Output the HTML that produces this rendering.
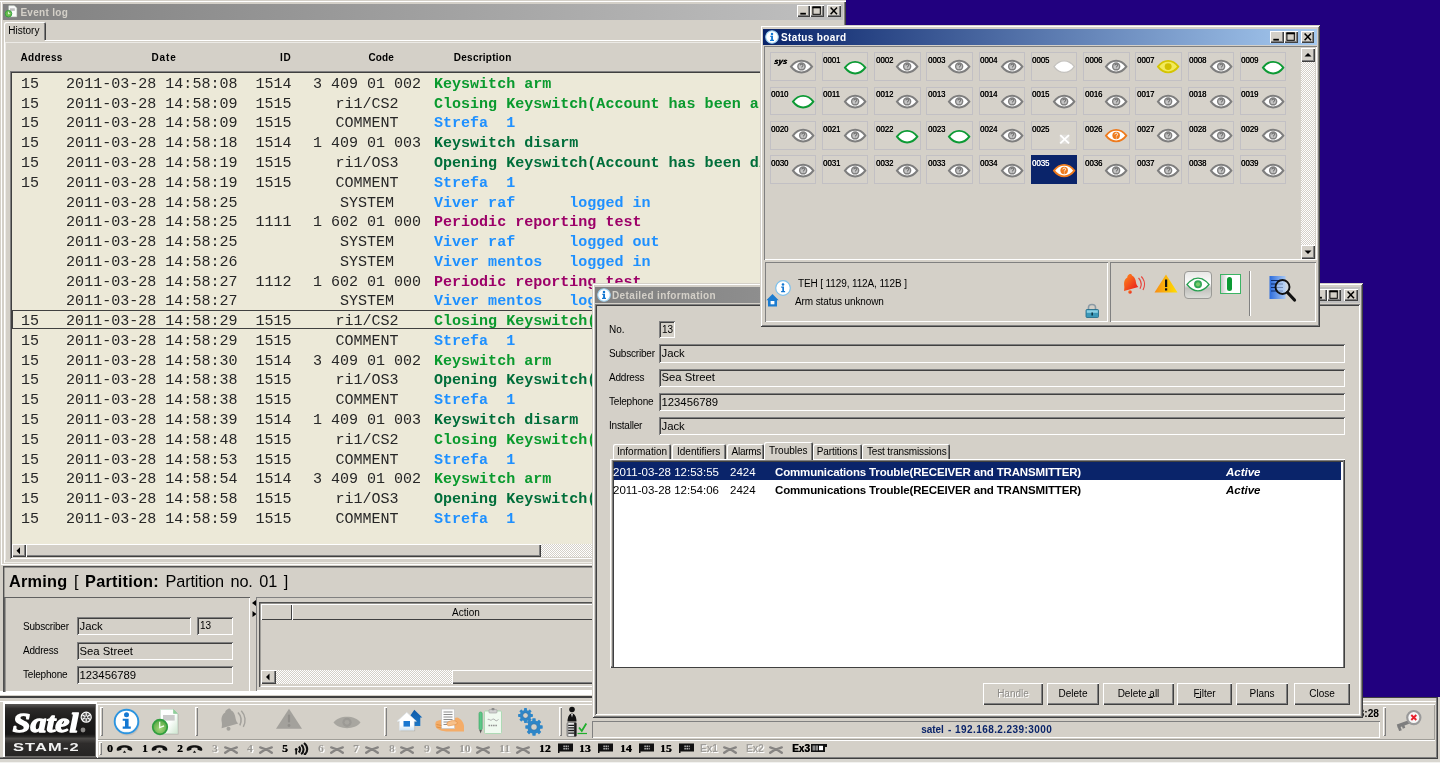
<!DOCTYPE html>
<html><head><meta charset="utf-8"><title>STAM-2</title>
<style>
*{box-sizing:border-box;margin:0;padding:0}
html,body{width:1440px;height:763px;overflow:hidden;background:#21007f}
body{position:relative;font-family:"Liberation Sans",sans-serif;font-size:11px;color:#000}
.a{position:absolute}
.t{position:absolute;white-space:pre;line-height:1}
.face{background:#d4d0c8}
.win{position:absolute;background:#d4d0c8;box-shadow:inset 1px 1px #d4d0c8,inset -1px -1px #404040,inset 2px 2px #fff,inset -2px -2px #808080}
.sunk{box-shadow:inset 1px 1px #808080,inset -1px -1px #fff}
.sunk2{box-shadow:inset 1px 1px #808080,inset -1px -1px #fff,inset 2px 2px #404040,inset -2px -2px #d4d0c8}
.rais{box-shadow:inset 1px 1px #fff,inset -1px -1px #808080}
.btn{position:absolute;background:#d4d0c8;box-shadow:inset 1px 1px #fff,inset -1px -1px #404040,inset -2px -2px #808080}
.cap{position:absolute;width:13.800px;height:12.200px;background:#d4d0c8;box-shadow:inset 1px 1px #fff,inset -1px -1px #404040,inset -2px -2px #808080}
.tba{background:linear-gradient(to right,#0a246a,#a6caf0)}
.tbi{background:linear-gradient(to right,#808080,#c0c0c0)}
.dith{background-image:conic-gradient(#fff 25%,#d4d0c8 0 50%,#fff 0 75%,#d4d0c8 0);background-size:2px 2px}
.mono{font-family:"Liberation Mono",monospace}
</style></head>
<body>
<div class="a" style="left:0;top:0;width:1440px;height:763px;overflow:hidden;will-change:transform">
<div class="a face" style="left:0px;top:0px;width:846px;height:697px;box-shadow:inset 0 1px #d4d0c8,inset 0 2px #fff,inset -1px 0 #404040,inset -2px 0 #808080"></div>
<div class="a " style="left:2px;top:564.3px;width:842px;height:1px;background:#fff"></div>
<div class="a " style="left:0px;top:691px;width:846px;height:4px;background:#fff"></div>
<div class="a " style="left:0px;top:696px;width:846px;height:1.4px;background:#404040"></div>
<div class="a tbi" style="left:3px;top:4px;width:840px;height:15.5px;"></div>
<svg class="a" style="left:4px;top:4px" width="14" height="15" viewBox="0 0 14 15"><path d="M4.800 1.800h5.600l2.300 2.300v8.600H4.800z" fill="#fafafa" stroke="#d8e8d8" stroke-width=".5"/><rect x="6" y="4.300" width="4.800" height="2.600" fill="#bdbdbd"/><circle cx="4.500" cy="9.700" r="3.300" fill="#6cbd4c" stroke="#2f9e3f" stroke-width=".9"/><path d="M4.500 7.800v2.200l1.700-.6" stroke="#f0fff0" stroke-width=".8" fill="none"/></svg>
<div class="t " style="left:20.4px;top:7.6px;font-size:10px;font-weight:bold;color:#d4d0c8;letter-spacing:.3px">Event log</div>
<div class="cap" style="left:796.6px;top:5.2px"><svg class="a" style="left:0;top:0" width="14" height="12"><rect x="3.300" y="7.800" width="5.600" height="1.800" fill="#000"/></svg></div>
<div class="cap" style="left:810.4px;top:5.2px"><svg class="a" style="left:0;top:0" width="14" height="12"><rect x="2.900" y="2" width="7.400" height="7.300" fill="none" stroke="#000" stroke-width="1"/><rect x="2.400" y="1.500" width="8.400" height="1.800" fill="#000"/></svg></div>
<div class="cap" style="left:827.2px;top:5.2px"><svg class="a" style="left:0;top:0" width="14" height="12"><path d="M3.600 2.400L10 9.200M10 2.400L3.600 9.200" stroke="#000" stroke-width="1.500" fill="none"/></svg></div>
<div class="a " style="left:4px;top:22px;width:42px;height:19px;background:#d4d0c8;box-shadow:inset 1px 1px #fff,inset -1px 0 #404040,inset -2px 0 #808080;border-radius:2px 2px 0 0"></div>
<div class="t " style="left:8.3px;top:25.5px;font-size:10px;">History</div>
<div class="a " style="left:4px;top:40px;width:838px;height:523px;box-shadow:inset 1px 1px #fff,inset -1px -1px #f0eee8"></div>
<div class="a face" style="left:5px;top:40px;width:40px;height:1px;"></div>
<div class="a " style="left:5px;top:41.8px;width:835px;height:518px;box-shadow:inset 1px 1px #eceae6"></div>
<div class="t " style="left:20.5px;top:52.6px;font-size:10px;font-weight:bold;letter-spacing:0.32px">Address</div>
<div class="t " style="left:151.5px;top:52.6px;font-size:10px;font-weight:bold;letter-spacing:0.85px">Date</div>
<div class="t " style="left:280px;top:52.6px;font-size:10px;font-weight:bold;letter-spacing:0.8px">ID</div>
<div class="t " style="left:368.5px;top:52.6px;font-size:10px;font-weight:bold;letter-spacing:0.1px">Code</div>
<div class="t " style="left:453.8px;top:52.6px;font-size:10px;font-weight:bold;letter-spacing:0.25px">Description</div>
<div class="a sunk2" style="left:10px;top:71px;width:828px;height:488px;background:#ece9d8"></div>
<div class="a mono" style="left:12px;top:73px;width:824px;height:470px;overflow:hidden;font-size:15.04px;line-height:1">
<div class="t" style="left:9px;top:3.9px;color:#262626">15   2011-03-28 14:58:08  1514</div><div class="t" style="left:300.9px;top:3.9px;color:#262626">3 409 01 002</div><div class="t" style="left:422px;top:3.9px;font-weight:bold;color:#0a9a2e">Keyswitch arm</div>
<div class="t" style="left:9px;top:23.67px;color:#262626">15   2011-03-28 14:58:09  1515</div><div class="t" style="left:323.4px;top:23.67px;color:#262626">ri1/CS2</div><div class="t" style="left:422px;top:23.67px;font-weight:bold;color:#0a9a2e">Closing Keyswitch(Account has been armed)</div>
<div class="t" style="left:9px;top:43.44px;color:#262626">15   2011-03-28 14:58:09  1515</div><div class="t" style="left:323.4px;top:43.44px;color:#262626">COMMENT</div><div class="t" style="left:422px;top:43.44px;font-weight:bold;color:#1e90ff">Strefa  1</div>
<div class="t" style="left:9px;top:63.21px;color:#262626">15   2011-03-28 14:58:18  1514</div><div class="t" style="left:300.9px;top:63.21px;color:#262626">1 409 01 003</div><div class="t" style="left:422px;top:63.21px;font-weight:bold;color:#006e3a">Keyswitch disarm</div>
<div class="t" style="left:9px;top:82.98px;color:#262626">15   2011-03-28 14:58:19  1515</div><div class="t" style="left:323.4px;top:82.98px;color:#262626">ri1/OS3</div><div class="t" style="left:422px;top:82.98px;font-weight:bold;color:#006e3a">Opening Keyswitch(Account has been disarmed)</div>
<div class="t" style="left:9px;top:102.75px;color:#262626">15   2011-03-28 14:58:19  1515</div><div class="t" style="left:323.4px;top:102.75px;color:#262626">COMMENT</div><div class="t" style="left:422px;top:102.75px;font-weight:bold;color:#1e90ff">Strefa  1</div>
<div class="t" style="left:9px;top:122.52px;color:#262626">     2011-03-28 14:58:25      </div><div class="t" style="left:327.9px;top:122.52px;color:#262626">SYSTEM</div><div class="t" style="left:422px;top:122.52px;font-weight:bold;color:#1e90ff">Viver raf      logged in</div>
<div class="t" style="left:9px;top:142.29px;color:#262626">     2011-03-28 14:58:25  1111</div><div class="t" style="left:300.9px;top:142.29px;color:#262626">1 602 01 000</div><div class="t" style="left:422px;top:142.29px;font-weight:bold;color:#9c0068">Periodic reporting test</div>
<div class="t" style="left:9px;top:162.06px;color:#262626">     2011-03-28 14:58:25      </div><div class="t" style="left:327.9px;top:162.06px;color:#262626">SYSTEM</div><div class="t" style="left:422px;top:162.06px;font-weight:bold;color:#1e90ff">Viver raf      logged out</div>
<div class="t" style="left:9px;top:181.83px;color:#262626">     2011-03-28 14:58:26      </div><div class="t" style="left:327.9px;top:181.83px;color:#262626">SYSTEM</div><div class="t" style="left:422px;top:181.83px;font-weight:bold;color:#1e90ff">Viver mentos   logged in</div>
<div class="t" style="left:9px;top:201.6px;color:#262626">     2011-03-28 14:58:27  1112</div><div class="t" style="left:300.9px;top:201.6px;color:#262626">1 602 01 000</div><div class="t" style="left:422px;top:201.6px;font-weight:bold;color:#9c0068">Periodic reporting test</div>
<div class="t" style="left:9px;top:221.37px;color:#262626">     2011-03-28 14:58:27      </div><div class="t" style="left:327.9px;top:221.37px;color:#262626">SYSTEM</div><div class="t" style="left:422px;top:221.37px;font-weight:bold;color:#1e90ff">Viver mentos   logged out</div>
<div class="a" style="left:0;top:236.8px;width:824px;height:19.400px;border:1.200px solid #404040"></div>
<div class="t" style="left:9px;top:241.14px;color:#262626">15   2011-03-28 14:58:29  1515</div><div class="t" style="left:323.4px;top:241.14px;color:#262626">ri1/CS2</div><div class="t" style="left:422px;top:241.14px;font-weight:bold;color:#0a9a2e">Closing Keyswitch(Account has been armed)</div>
<div class="t" style="left:9px;top:260.91px;color:#262626">15   2011-03-28 14:58:29  1515</div><div class="t" style="left:323.4px;top:260.91px;color:#262626">COMMENT</div><div class="t" style="left:422px;top:260.91px;font-weight:bold;color:#1e90ff">Strefa  1</div>
<div class="t" style="left:9px;top:280.68px;color:#262626">15   2011-03-28 14:58:30  1514</div><div class="t" style="left:300.9px;top:280.68px;color:#262626">3 409 01 002</div><div class="t" style="left:422px;top:280.68px;font-weight:bold;color:#0a9a2e">Keyswitch arm</div>
<div class="t" style="left:9px;top:300.45px;color:#262626">15   2011-03-28 14:58:38  1515</div><div class="t" style="left:323.4px;top:300.45px;color:#262626">ri1/OS3</div><div class="t" style="left:422px;top:300.45px;font-weight:bold;color:#006e3a">Opening Keyswitch(Account has been disarmed)</div>
<div class="t" style="left:9px;top:320.22px;color:#262626">15   2011-03-28 14:58:38  1515</div><div class="t" style="left:323.4px;top:320.22px;color:#262626">COMMENT</div><div class="t" style="left:422px;top:320.22px;font-weight:bold;color:#1e90ff">Strefa  1</div>
<div class="t" style="left:9px;top:339.99px;color:#262626">15   2011-03-28 14:58:39  1514</div><div class="t" style="left:300.9px;top:339.99px;color:#262626">1 409 01 003</div><div class="t" style="left:422px;top:339.99px;font-weight:bold;color:#006e3a">Keyswitch disarm</div>
<div class="t" style="left:9px;top:359.76px;color:#262626">15   2011-03-28 14:58:48  1515</div><div class="t" style="left:323.4px;top:359.76px;color:#262626">ri1/CS2</div><div class="t" style="left:422px;top:359.76px;font-weight:bold;color:#0a9a2e">Closing Keyswitch(Account has been armed)</div>
<div class="t" style="left:9px;top:379.53px;color:#262626">15   2011-03-28 14:58:53  1515</div><div class="t" style="left:323.4px;top:379.53px;color:#262626">COMMENT</div><div class="t" style="left:422px;top:379.53px;font-weight:bold;color:#1e90ff">Strefa  1</div>
<div class="t" style="left:9px;top:399.3px;color:#262626">15   2011-03-28 14:58:54  1514</div><div class="t" style="left:300.9px;top:399.3px;color:#262626">3 409 01 002</div><div class="t" style="left:422px;top:399.3px;font-weight:bold;color:#0a9a2e">Keyswitch arm</div>
<div class="t" style="left:9px;top:419.07px;color:#262626">15   2011-03-28 14:58:58  1515</div><div class="t" style="left:323.4px;top:419.07px;color:#262626">ri1/OS3</div><div class="t" style="left:422px;top:419.07px;font-weight:bold;color:#006e3a">Opening Keyswitch(Account has been disarmed)</div>
<div class="t" style="left:9px;top:438.84px;color:#262626">15   2011-03-28 14:58:59  1515</div><div class="t" style="left:323.4px;top:438.84px;color:#262626">COMMENT</div><div class="t" style="left:422px;top:438.84px;font-weight:bold;color:#1e90ff">Strefa  1</div>
</div>
<div class="a dith" style="left:12px;top:543.5px;width:824px;height:13.5px;"></div>
<div class="a btn" style="left:12px;top:543.5px;width:13.5px;height:13.5px;"><svg class="a" style="left:0;top:0" width="14" height="14"><path d="M8 3.300v7l-3.500-3.500z" fill="#000"/></svg></div>
<div class="a btn" style="left:25.5px;top:543.5px;width:515.5px;height:13.5px;"></div>
<div class="a " style="left:1.2px;top:2px;width:1px;height:563px;background:#fff"></div>
<div class="a " style="left:3px;top:566.4px;width:841px;height:126px;box-shadow:inset 1.400px 1.600px #505050"></div>
<div class="t" style="left:9px;top:572.700px;font-size:16.300px;word-spacing:2.200px;letter-spacing:-.15px"><b style="letter-spacing:.25px">Arming</b> [ <b style="letter-spacing:.25px">Partition:</b> Partition no. 01 ]</div>
<div class="a " style="left:3.5px;top:597px;width:246.5px;height:94.6px;box-shadow:inset 1.500px 1px #606060,inset -1px 0 #fff"></div>
<div class="t " style="left:23px;top:622.2px;font-size:10px;letter-spacing:-.2px">Subscriber</div>
<div class="t " style="left:23px;top:646.2px;font-size:10px;letter-spacing:-.2px">Address</div>
<div class="t " style="left:23px;top:670.2px;font-size:10px;letter-spacing:-.2px">Telephone</div>
<div class="a " style="left:77px;top:617px;width:114px;height:18px;background:#d4d0c8;box-shadow:inset 1px 1px #808080,inset -1px -1px #fff,inset 2px 2px #404040"></div>
<div class="t " style="left:79.5px;top:621px;font-size:11.3px;">Jack</div>
<div class="a " style="left:197px;top:617px;width:36px;height:18px;background:#d4d0c8;box-shadow:inset 1px 1px #808080,inset -1px -1px #fff,inset 2px 2px #404040"></div>
<div class="t " style="left:200px;top:621.3px;font-size:10px;">13</div>
<div class="a " style="left:77px;top:642px;width:156px;height:18px;background:#d4d0c8;box-shadow:inset 1px 1px #808080,inset -1px -1px #fff,inset 2px 2px #404040"></div>
<div class="t " style="left:79.5px;top:645.5px;font-size:11.3px;">Sea Street</div>
<div class="a " style="left:77px;top:666px;width:156px;height:18px;background:#d4d0c8;box-shadow:inset 1px 1px #808080,inset -1px -1px #fff,inset 2px 2px #404040"></div>
<div class="t " style="left:79.5px;top:670px;font-size:11.3px;">123456789</div>
<div class="a face" style="left:250px;top:597px;width:7px;height:94px;"></div>
<svg class="a" style="left:250.500px;top:598px" width="7" height="22"><path d="M5 2v6L1 5z M1.5 13v6l4-3z" fill="#000"/></svg>
<div class="a " style="left:255.5px;top:596.8px;width:587px;height:94px;box-shadow:inset 1px 1px #808080,inset -1px -1px #fff"></div>
<div class="a " style="left:259.3px;top:601.6px;width:582px;height:85.4px;box-shadow:inset 1.400px 1.400px #505050,inset -1px -1px #fff"></div>
<div class="a " style="left:261px;top:604px;width:31px;height:16px;box-shadow:inset 1px 1px #fff,inset -1px -1px #404040"></div>
<div class="a " style="left:292px;top:604px;width:346px;height:16px;box-shadow:inset 1px 1px #fff,inset -1px -1px #404040"></div>
<div class="t " style="left:452px;top:607.7px;font-size:10px;">Action</div>
<div class="a dith" style="left:261px;top:670px;width:580px;height:14px;"></div>
<div class="a btn" style="left:261px;top:670px;width:15px;height:14px;"><svg class="a" style="left:0;top:0" width="15" height="14"><path d="M8.5 3.5v7l-3.5-3.5z" fill="#000"/></svg></div>
<div class="a btn" style="left:452px;top:670px;width:200px;height:14px;"></div>
<div class="a face" style="left:0px;top:697px;width:1440px;height:66px;"></div>
<div class="a " style="left:0px;top:697px;width:1438px;height:62px;box-shadow:inset 0 1px #404040,inset -1px -1px #404040,inset -2px -2px #808080"></div>
<div class="a " style="left:0px;top:701px;width:1436px;height:1px;background:#fff"></div>
<div class="a " style="left:0px;top:759.3px;width:1440px;height:2.7px;background:#d8d6d0"></div>
<div class="a " style="left:0px;top:762px;width:1440px;height:1px;background:#f2f2f0"></div>
<div class="a " style="left:97px;top:704px;width:1338px;height:36px;box-shadow:inset 1px 1px #fff,inset -1px -1px #a09e98"></div>
<div class="a " style="left:97px;top:740px;width:1338px;height:18px;box-shadow:inset 1px 1px #fff"></div>
<div class="a " style="left:100px;top:707.3px;width:3px;height:28.4px;box-shadow:inset 1px 1px #fff,inset -1px -1px #808080"></div>
<div class="a " style="left:194.5px;top:707.3px;width:3px;height:28.4px;box-shadow:inset 1px 1px #fff,inset -1px -1px #808080"></div>
<div class="a " style="left:383.6px;top:707.3px;width:3px;height:28.4px;box-shadow:inset 1px 1px #fff,inset -1px -1px #808080"></div>
<div class="a " style="left:559px;top:707.3px;width:3px;height:28.4px;box-shadow:inset 1px 1px #fff,inset -1px -1px #808080"></div>
<div class="a " style="left:99px;top:742px;width:3px;height:13px;box-shadow:inset 1px 1px #fff,inset -1px -1px #808080"></div>
<div class="a " style="left:2.5px;top:701px;width:94px;height:55.5px;background:#fff"></div>
<div class="a " style="left:3px;top:756.5px;width:93.5px;height:1.5px;background:#5c5a58"></div>
<div class="a " style="left:5px;top:704.3px;width:91px;height:53.2px;background:#6e6c6a"></div>
<div class="a " style="left:5px;top:704.3px;width:89.5px;height:52px;background:linear-gradient(#5a5856,#2c2a29 9%,#1d1c1b 30%,#171616 58%,#2a2928 63%,#4c4a48 66%,#2e2c2b 76%,#262524 100%)"></div>
<svg class="a" style="left:8px;top:706px" width="86" height="30" viewBox="0 0 86 30"><text x="4.800" y="26.200" font-family="Liberation Serif" font-weight="bold" font-style="italic" font-size="27" fill="#fff" stroke="#fff" stroke-width="1.300" stroke-linejoin="round" textLength="65.500" lengthAdjust="spacingAndGlyphs">Satel</text></svg>
<svg class="a" style="left:79.500px;top:710.700px" width="12.400" height="12.400" viewBox="0 0 12 12"><circle cx="6" cy="6" r="4.900" fill="#fff" fill-opacity=".25" stroke="#fff" stroke-width="1.100"/><path d="M6 1.500v9M2.100 3.700l7.800 4.600M9.900 3.700L2.100 8.300" stroke="#fff" stroke-width="1.100"/><circle cx="6" cy="6" r="1" fill="#222"/></svg>
<svg class="a" style="left:80px;top:727.300px" width="6" height="6"><circle cx="3" cy="3" r="2.400" fill="#8c8a88"/></svg>
<div class="t" style="left:13.400px;top:742.700px;font-weight:bold;font-size:10.300px;color:#f2f2f2;letter-spacing:.7px;transform:scaleX(1.600);transform-origin:0 0">STAM-2</div>
<svg class="a" style="left:112px;top:707px" width="30" height="30" viewBox="0 0 30 30"><defs><radialGradient id="gi" cx=".5" cy=".4" r=".6"><stop offset="0" stop-color="#fff"/><stop offset=".8" stop-color="#fff"/><stop offset="1" stop-color="#d8ecfa"/></radialGradient></defs><ellipse cx="15.5" cy="16.5" rx="12" ry="12" fill="#9a9a9a" opacity=".35"/><circle cx="14.5" cy="14.5" r="11.8" fill="url(#gi)" stroke="#2b94e0" stroke-width="1.900"/><circle cx="14.500" cy="7.700" r="2.500" fill="#1478d2"/><path d="M10.700 11.700h5.900v7.900h2.200v2.100h-8.100v-2.100h2.300v-5.800h-2.300z" fill="#1478d2"/></svg>
<svg class="a" style="left:150px;top:707px" width="32" height="30" viewBox="0 0 32 30"><defs><linearGradient id="gd" x1="0" y1="0" x2="1" y2="1"><stop offset="0" stop-color="#fff"/><stop offset=".55" stop-color="#fcfefc"/><stop offset="1" stop-color="#cfe6d0"/></linearGradient><radialGradient id="gc" cx=".5" cy=".62" r=".6"><stop offset="0" stop-color="#a4d67c"/><stop offset=".7" stop-color="#6cb552"/><stop offset="1" stop-color="#4da344"/></radialGradient></defs><path d="M11.500 3.500h13l4 4V27.500H11.500z" fill="#8a8a86" opacity=".45"/><path d="M10.500 2.500h13l4 4V26.500H10.500z" fill="url(#gd)" stroke="#cfe4d2" stroke-width=".7"/><path d="M23.500 2.500v4h4z" fill="#8fcf9a" stroke="#7cc088" stroke-width=".5"/><rect x="13" y="8" width="11.700" height="5.600" fill="#cbcbcb"/><circle cx="10" cy="20" r="7.300" fill="url(#gc)" stroke="#2f9e3f" stroke-width="1.700"/><path d="M9.700 14.700v5.900l4.400-1.700" stroke="#f4fff0" stroke-width="1.200" fill="none"/></svg>
<svg class="a" style="left:218px;top:707px" width="30" height="26" viewBox="0 0 30 26"><g fill="#a3a19c"><path d="M9.5 2.2c1.4-1.2 3.2-.4 3.5 1 3 1.3 4 4.4 4.6 8.2.4 2.4 1.3 3.7 2.6 5.2l-16.6 4.6c.2-1.8.6-3.5.2-6C3 11.300 3.800 7.600 7.200 5.500c-.1-1.300.7-2.500 2.300-3.300z"/><circle cx="10.500" cy="21.800" r="2"/></g><path d="M20 5.500c3.400 3.400 4 8.800 1.800 12.800" stroke="#a3a19c" stroke-width="1.600" fill="none"/><path d="M23.300 3.800c4.300 4.600 4.800 11 2 16" stroke="#a3a19c" stroke-width="1.400" fill="none"/></svg>
<svg class="a" style="left:274px;top:707px" width="30" height="24" viewBox="0 0 30 24"><path d="M15 1.800L28 21.800H2z" fill="#a3a19c"/><rect x="13.900" y="7.500" width="2.200" height="8" rx="1" fill="#908e8a"/><circle cx="15" cy="18.500" r="1.400" fill="#908e8a"/></svg>
<svg class="a" style="left:332px;top:714px" width="30" height="17" viewBox="0 0 30 17"><path d="M1.500 8.500C7 .800 23 .800 28.500 8.500 23 16 7 16 1.500 8.500z" fill="#a8a6a0"/><circle cx="15" cy="8.300" r="4.600" fill="#9c9a95"/><circle cx="15" cy="8.300" r="2.400" fill="#a8a6a0"/></svg>
<svg class="a" style="left:395px;top:708px" width="30" height="26" viewBox="0 0 30 26"><defs><linearGradient id="gh" x1="0" y1="0" x2="0" y2="1"><stop offset="0" stop-color="#0f5aa8"/><stop offset="1" stop-color="#1c78c8"/></linearGradient><linearGradient id="gh2" x1="0" y1="0" x2="0" y2="1"><stop offset="0" stop-color="#fff"/><stop offset=".7" stop-color="#fff"/><stop offset="1" stop-color="#cfe4f4"/></linearGradient></defs><path d="M19.300 1.800l8 7.700h-2v8.600H14V9.500z" fill="url(#gh)"/><path d="M3.200 14.200L12.800 5.400l9.600 8.800h-2.300v9H5.500v-9z" fill="#8a8a86" opacity=".35"/><path d="M2.200 13.200L11.800 4.400l9.600 8.800h-2.300v9H4.500v-9z" fill="url(#gh2)" stroke="#dfe8f0" stroke-width=".6"/><rect x="8.500" y="13" width="6.500" height="5.600" fill="#1c78d0"/></svg>
<svg class="a" style="left:434px;top:707px" width="32" height="28" viewBox="0 0 32 28"><path d="M2 14.500c3-1.500 6-2 9-1.500l12-2.500c3 .5 6.500 4 7 8.500v5.500H14c-4 0-9-1-11.500-3.500C1 19 1 16.500 2 14.500z" fill="#f4ac68"/><path d="M7.500 2h13v19.500h-13z" fill="#fcfcfc" stroke="#c8c8c8" stroke-width=".8"/><path d="M9.500 5h9M9.500 7.500h9M9.500 10h9M9.500 12.500h9M9.500 15h9M9.500 17.500h9" stroke="#8c8c8c" stroke-width="1"/><path d="M14 15c2.500-1.500 6.500-2 8.500-.500 1.500 1.200.5 3-1.500 3.300l-6 1c-2 .2-3-2.500-1-3.800z" fill="#f7c08a" stroke="#e08c3c" stroke-width=".6"/><path d="M2.500 17.500l5 1M2.500 20l5 1" stroke="#d88838" stroke-width=".8"/></svg>
<svg class="a" style="left:476px;top:706px" width="30" height="30" viewBox="0 0 30 30"><rect x="3" y="6" width="3.200" height="18" rx="1.500" fill="#5cc888" stroke="#38a060" stroke-width=".6"/><path d="M3.300 24l1.300 3.500 1.300-3.500z" fill="#555"/><rect x="8.500" y="5" width="17" height="22.500" rx="1" fill="#f0faf0" stroke="#a8d8b0" stroke-width=".9"/><rect x="13" y="3.600" width="8" height="3.400" rx=".8" fill="#d0d0d0" stroke="#9a9a9a" stroke-width=".6"/><rect x="15.500" y="2" width="3" height="2.200" rx=".8" fill="#8a8a8a"/><path d="M11.500 14c1.500-2 2.500 1 4 0s2-1.500 3.500 0 2 .5 3.500-.500" stroke="#9a9a9a" stroke-width=".8" fill="none"/><path d="M12.500 19.500h9" stroke="#8c8c8c" stroke-width="1.600" stroke-dasharray="1.500 .8"/></svg>
<svg class="a" style="left:514px;top:705px" width="34" height="34" viewBox="0 0 34 34"><g fill="#2e86c8"><rect x="10.04" y="3.11" width="2.91" height="3.36" rx=".6" transform="rotate(0.0 11.5 10.5)"/><rect x="10.04" y="3.11" width="2.91" height="3.36" rx=".6" transform="rotate(45.0 11.5 10.5)"/><rect x="10.04" y="3.11" width="2.91" height="3.36" rx=".6" transform="rotate(90.0 11.5 10.5)"/><rect x="10.04" y="3.11" width="2.91" height="3.36" rx=".6" transform="rotate(135.0 11.5 10.5)"/><rect x="10.04" y="3.11" width="2.91" height="3.36" rx=".6" transform="rotate(180.0 11.5 10.5)"/><rect x="10.04" y="3.11" width="2.91" height="3.36" rx=".6" transform="rotate(225.0 11.5 10.5)"/><rect x="10.04" y="3.11" width="2.91" height="3.36" rx=".6" transform="rotate(270.0 11.5 10.5)"/><rect x="10.04" y="3.11" width="2.91" height="3.36" rx=".6" transform="rotate(315.0 11.5 10.5)"/><circle cx="11.5" cy="10.5" r="5.6"/></g><circle cx="11.5" cy="10.5" r="2.80" fill="#d4d0c8"/><circle cx="11.5" cy="10.5" r="2.80" fill="none" stroke="#1c68a8" stroke-width=".7"/><g fill="#2e86c8"><rect x="18.28" y="13.29" width="3.43" height="3.96" rx=".6" transform="rotate(0.0 20 22)"/><rect x="18.28" y="13.29" width="3.43" height="3.96" rx=".6" transform="rotate(45.0 20 22)"/><rect x="18.28" y="13.29" width="3.43" height="3.96" rx=".6" transform="rotate(90.0 20 22)"/><rect x="18.28" y="13.29" width="3.43" height="3.96" rx=".6" transform="rotate(135.0 20 22)"/><rect x="18.28" y="13.29" width="3.43" height="3.96" rx=".6" transform="rotate(180.0 20 22)"/><rect x="18.28" y="13.29" width="3.43" height="3.96" rx=".6" transform="rotate(225.0 20 22)"/><rect x="18.28" y="13.29" width="3.43" height="3.96" rx=".6" transform="rotate(270.0 20 22)"/><rect x="18.28" y="13.29" width="3.43" height="3.96" rx=".6" transform="rotate(315.0 20 22)"/><circle cx="20" cy="22" r="6.6"/></g><circle cx="20" cy="22" r="3.30" fill="#d4d0c8"/><circle cx="20" cy="22" r="3.30" fill="none" stroke="#1c68a8" stroke-width=".7"/></svg>
<svg class="a" style="left:563px;top:705px" width="28" height="32" viewBox="0 0 28 32"><circle cx="9" cy="4.500" r="2.800" fill="#111"/><path d="M4.500 16.500c0-5 2-8 4.500-8s4.500 3 4.500 8z" fill="#111"/><path d="M8 9l1 3.500L10 9z" fill="#ddd"/><defs><linearGradient id="gp" x1="0" y1="0" x2="1" y2="0"><stop offset="0" stop-color="#9a9a9a"/><stop offset=".25" stop-color="#f0f0f0"/><stop offset=".7" stop-color="#d8d8d8"/><stop offset=".8" stop-color="#222"/><stop offset="1" stop-color="#111"/></linearGradient></defs><rect x="4" y="17.500" width="9.500" height="14" rx="1.200" fill="url(#gp)" stroke="#555" stroke-width=".6"/><path d="M5.200 20.300h6M5.200 22.900h6M5.200 25.500h6M5.200 28.100h6" stroke="#1a1a1a" stroke-width="1.300"/><path d="M16 22.500l2.800 3.500 4.500-7.500" stroke="#1fae2c" stroke-width="1.800" fill="none"/><path d="M14.500 28.500h9.500" stroke="#1fae2c" stroke-width="1.200"/></svg>
<div class="t " style="left:107px;top:744px;font-size:9.6px;font-family:'Liberation Serif',serif;font-weight:bold;color:#000;transform:scaleX(1.220);transform-origin:0 0;text-shadow:.3px 0 #000">0</div>
<svg class="a" style="left:116px;top:742.700px" width="17" height="10" viewBox="0 0 17 10"><path d="M.7 6.300C1.200 .9 15.800 .9 16.300 6.300c.1 1.300-.5 1.700-1.800 1.400l-2.300-.6c-.9-.3-.8-1.300-.7-2.100-1.800-.8-4.200-.8-6 0 .1.800.2 1.800-.7 2.100l-2.300.6c-1.300.3-1.900-.1-1.800-1.400z" fill="#111"/><path d="M6.900 9.700l1.600-2.300 1.600 2.300z" fill="#111"/></svg>
<div class="t " style="left:142px;top:744px;font-size:9.6px;font-family:'Liberation Serif',serif;font-weight:bold;color:#000;transform:scaleX(1.220);transform-origin:0 0;text-shadow:.3px 0 #000">1</div>
<svg class="a" style="left:151px;top:742.700px" width="17" height="10" viewBox="0 0 17 10"><path d="M.7 6.300C1.200 .9 15.800 .9 16.300 6.300c.1 1.300-.5 1.700-1.800 1.400l-2.300-.6c-.9-.3-.8-1.300-.7-2.100-1.800-.8-4.200-.8-6 0 .1.800.2 1.800-.7 2.100l-2.300.6c-1.300.3-1.900-.1-1.800-1.400z" fill="#111"/><path d="M6.900 9.700l1.600-2.300 1.600 2.300z" fill="#111"/></svg>
<div class="t " style="left:177px;top:744px;font-size:9.6px;font-family:'Liberation Serif',serif;font-weight:bold;color:#000;transform:scaleX(1.220);transform-origin:0 0;text-shadow:.3px 0 #000">2</div>
<svg class="a" style="left:186px;top:742.700px" width="17" height="10" viewBox="0 0 17 10"><path d="M.7 6.300C1.200 .9 15.800 .9 16.300 6.300c.1 1.300-.5 1.700-1.800 1.400l-2.300-.6c-.9-.3-.8-1.300-.7-2.100-1.800-.8-4.200-.8-6 0 .1.800.2 1.800-.7 2.100l-2.300.6c-1.300.3-1.900-.1-1.800-1.400z" fill="#111"/><path d="M6.900 9.700l1.600-2.300 1.600 2.300z" fill="#111"/></svg>
<div class="t " style="left:212px;top:744px;font-size:9.6px;font-family:'Liberation Serif',serif;font-weight:bold;color:#9a9894;transform:scaleX(1.220);transform-origin:0 0;text-shadow:1px 1px #fff">3</div>
<svg class="a" style="left:224px;top:746px" width="14" height="8" viewBox="0 0 14 8"><path d="M1.200 1.300C5 2.300 9.500 4.300 12.800 6.700M12.800 1.300C9 2.300 4.500 4.300 1.200 6.700" stroke="#868482" stroke-width="2.300" fill="none" stroke-linecap="round"/></svg>
<div class="t " style="left:247px;top:744px;font-size:9.6px;font-family:'Liberation Serif',serif;font-weight:bold;color:#9a9894;transform:scaleX(1.220);transform-origin:0 0;text-shadow:1px 1px #fff">4</div>
<svg class="a" style="left:259px;top:746px" width="14" height="8" viewBox="0 0 14 8"><path d="M1.200 1.300C5 2.300 9.500 4.300 12.800 6.700M12.800 1.300C9 2.300 4.500 4.300 1.200 6.700" stroke="#868482" stroke-width="2.300" fill="none" stroke-linecap="round"/></svg>
<div class="t " style="left:282px;top:744px;font-size:9.6px;font-family:'Liberation Serif',serif;font-weight:bold;color:#000;transform:scaleX(1.220);transform-origin:0 0;text-shadow:.3px 0 #000">5</div>
<svg class="a" style="left:294px;top:741.500px" width="17" height="13" viewBox="0 0 17 13"><path d="M2.200 7.500v5" stroke="#111" stroke-width="1.700"/><circle cx="2.200" cy="7.300" r="1.300" fill="#111"/><path d="M4.800 4.600c1.700 1.400 1.700 4.200-.2 5.800M7.300 2.800c3 2.300 3 7-.2 9.300M10 1c4.300 3.200 4.300 9.500 0 12" stroke="#111" stroke-width="2.100" fill="none"/></svg>
<div class="t " style="left:318px;top:744px;font-size:9.6px;font-family:'Liberation Serif',serif;font-weight:bold;color:#9a9894;transform:scaleX(1.220);transform-origin:0 0;text-shadow:1px 1px #fff">6</div>
<svg class="a" style="left:330px;top:746px" width="14" height="8" viewBox="0 0 14 8"><path d="M1.200 1.300C5 2.300 9.500 4.300 12.800 6.700M12.800 1.300C9 2.300 4.500 4.300 1.200 6.700" stroke="#868482" stroke-width="2.300" fill="none" stroke-linecap="round"/></svg>
<div class="t " style="left:353px;top:744px;font-size:9.6px;font-family:'Liberation Serif',serif;font-weight:bold;color:#9a9894;transform:scaleX(1.220);transform-origin:0 0;text-shadow:1px 1px #fff">7</div>
<svg class="a" style="left:365px;top:746px" width="14" height="8" viewBox="0 0 14 8"><path d="M1.200 1.300C5 2.300 9.500 4.300 12.800 6.700M12.800 1.300C9 2.300 4.500 4.300 1.200 6.700" stroke="#868482" stroke-width="2.300" fill="none" stroke-linecap="round"/></svg>
<div class="t " style="left:389px;top:744px;font-size:9.6px;font-family:'Liberation Serif',serif;font-weight:bold;color:#9a9894;transform:scaleX(1.220);transform-origin:0 0;text-shadow:1px 1px #fff">8</div>
<svg class="a" style="left:400px;top:746px" width="14" height="8" viewBox="0 0 14 8"><path d="M1.200 1.300C5 2.300 9.500 4.300 12.800 6.700M12.800 1.300C9 2.300 4.500 4.300 1.200 6.700" stroke="#868482" stroke-width="2.300" fill="none" stroke-linecap="round"/></svg>
<div class="t " style="left:424px;top:744px;font-size:9.6px;font-family:'Liberation Serif',serif;font-weight:bold;color:#9a9894;transform:scaleX(1.220);transform-origin:0 0;text-shadow:1px 1px #fff">9</div>
<svg class="a" style="left:436px;top:746px" width="14" height="8" viewBox="0 0 14 8"><path d="M1.200 1.300C5 2.300 9.500 4.300 12.800 6.700M12.800 1.300C9 2.300 4.500 4.300 1.200 6.700" stroke="#868482" stroke-width="2.300" fill="none" stroke-linecap="round"/></svg>
<div class="t " style="left:459px;top:744px;font-size:9.6px;font-family:'Liberation Serif',serif;font-weight:bold;color:#9a9894;transform:scaleX(1.220);transform-origin:0 0;text-shadow:1px 1px #fff">10</div>
<svg class="a" style="left:476px;top:746px" width="14" height="8" viewBox="0 0 14 8"><path d="M1.200 1.300C5 2.300 9.500 4.300 12.800 6.700M12.800 1.300C9 2.300 4.500 4.300 1.200 6.700" stroke="#868482" stroke-width="2.300" fill="none" stroke-linecap="round"/></svg>
<div class="t " style="left:499px;top:744px;font-size:9.6px;font-family:'Liberation Serif',serif;font-weight:bold;color:#9a9894;transform:scaleX(1.220);transform-origin:0 0;text-shadow:1px 1px #fff">11</div>
<svg class="a" style="left:516px;top:746px" width="14" height="8" viewBox="0 0 14 8"><path d="M1.200 1.300C5 2.300 9.500 4.300 12.800 6.700M12.800 1.300C9 2.300 4.500 4.300 1.200 6.700" stroke="#868482" stroke-width="2.300" fill="none" stroke-linecap="round"/></svg>
<div class="t " style="left:539px;top:744px;font-size:9.6px;font-family:'Liberation Serif',serif;font-weight:bold;color:#000;transform:scaleX(1.220);transform-origin:0 0;text-shadow:.3px 0 #000">12</div>
<svg class="a" style="left:558px;top:743px" width="15" height="10" viewBox="0 0 15 10"><path d="M0 .5h15V8.500H1.500V10H0z" fill="#111"/><path d="M5.500 2.500h1.200v4H5.500zM7.600 2.500h1.200v4H7.600zM9.700 2.500h.9v4h-.9z" fill="#ddd"/><path d="M5 4.500h6" stroke="#111" stroke-width=".8"/></svg>
<div class="t " style="left:579px;top:744px;font-size:9.6px;font-family:'Liberation Serif',serif;font-weight:bold;color:#000;transform:scaleX(1.220);transform-origin:0 0;text-shadow:.3px 0 #000">13</div>
<svg class="a" style="left:598px;top:743px" width="15" height="10" viewBox="0 0 15 10"><path d="M0 .5h15V8.500H1.500V10H0z" fill="#111"/><path d="M5.500 2.500h1.200v4H5.500zM7.600 2.500h1.200v4H7.600zM9.700 2.500h.9v4h-.9z" fill="#ddd"/><path d="M5 4.500h6" stroke="#111" stroke-width=".8"/></svg>
<div class="t " style="left:620px;top:744px;font-size:9.6px;font-family:'Liberation Serif',serif;font-weight:bold;color:#000;transform:scaleX(1.220);transform-origin:0 0;text-shadow:.3px 0 #000">14</div>
<svg class="a" style="left:639px;top:743px" width="15" height="10" viewBox="0 0 15 10"><path d="M0 .5h15V8.500H1.500V10H0z" fill="#111"/><path d="M5.500 2.500h1.200v4H5.500zM7.600 2.500h1.200v4H7.600zM9.700 2.500h.9v4h-.9z" fill="#ddd"/><path d="M5 4.500h6" stroke="#111" stroke-width=".8"/></svg>
<div class="t " style="left:660px;top:744px;font-size:9.6px;font-family:'Liberation Serif',serif;font-weight:bold;color:#000;transform:scaleX(1.220);transform-origin:0 0;text-shadow:.3px 0 #000">15</div>
<svg class="a" style="left:679px;top:743px" width="15" height="10" viewBox="0 0 15 10"><path d="M0 .5h15V8.500H1.500V10H0z" fill="#111"/><path d="M5.500 2.500h1.200v4H5.500zM7.600 2.500h1.200v4H7.600zM9.700 2.500h.9v4h-.9z" fill="#ddd"/><path d="M5 4.500h6" stroke="#111" stroke-width=".8"/></svg>
<div class="t " style="left:700px;top:744px;font-size:10px;font-weight:bold;color:#a09e9a;text-shadow:1px 1px #fff">Ex1</div>
<svg class="a" style="left:723px;top:746px" width="14" height="8" viewBox="0 0 14 8"><path d="M1.200 1.300C5 2.300 9.500 4.300 12.800 6.700M12.800 1.300C9 2.300 4.500 4.300 1.200 6.700" stroke="#868482" stroke-width="2.300" fill="none" stroke-linecap="round"/></svg>
<div class="t " style="left:746px;top:744px;font-size:10px;font-weight:bold;color:#a09e9a;text-shadow:1px 1px #fff">Ex2</div>
<svg class="a" style="left:769px;top:746px" width="14" height="8" viewBox="0 0 14 8"><path d="M1.200 1.300C5 2.300 9.500 4.300 12.800 6.700M12.800 1.300C9 2.300 4.500 4.300 1.200 6.700" stroke="#868482" stroke-width="2.300" fill="none" stroke-linecap="round"/></svg>
<div class="t " style="left:792px;top:744px;font-size:10px;font-weight:bold;color:#000;text-shadow:.4px 0 #000">Ex3</div>
<svg class="a" style="left:811px;top:744px" width="16" height="8" viewBox="0 0 16 8"><path d="M0 0h16v3h-2v5H0z" fill="#111"/><rect x="1.500" y="1.500" width="3" height="5" fill="#888"/><rect x="5" y="1.500" width="2" height="5" fill="#888"/><rect x="8" y="1.800" width="4" height="4.400" fill="#fff"/></svg>
<div class="a " style="left:592px;top:721px;width:788px;height:17px;box-shadow:inset 1px 1px #808080,inset -1px -1px #fff"></div>
<div class="t " style="left:921.3px;top:725px;font-size:10px;font-weight:bold;color:#0a246a;letter-spacing:-.1px">satel</div>
<div class="t " style="left:948px;top:725px;font-size:10px;font-weight:bold;color:#0a246a;letter-spacing:.43px">- 192.168.2.239:3000</div>
<div class="t" style="right:61px;top:708.600px;font-size:10.200px;font-weight:bold">14:58:28</div>
<div class="a " style="left:1383px;top:707px;width:3px;height:29px;box-shadow:inset 1px 1px #fff,inset -1px -1px #808080"></div>
<svg class="a" style="left:1394px;top:707px" width="30" height="24" viewBox="0 0 30 24"><g transform="rotate(-20 10 17)" fill="#7e7e7e"><rect x="3" y="15" width="14" height="3.600"/><rect x="3" y="17" width="2.800" height="5"/><rect x="7.300" y="17" width="2.600" height="4"/></g><circle cx="19.800" cy="10.600" r="6.600" fill="#f8f8f8" stroke="#9a9a9a" stroke-width="2.200"/><path d="M17.300 8l5 5M22.300 8l-5 5" stroke="#e8202c" stroke-width="1.900"/></svg>
<div class="a win" style="left:591.6px;top:283.3px;width:771.4px;height:434.7px;"></div>
<div class="a tbi" style="left:595px;top:287px;width:765px;height:16px;background:linear-gradient(to right,#808080,#c0c0c0)"></div>
<svg class="a" style="left:597px;top:288px" width="14" height="14" viewBox="0 0 14 14"><circle cx="7" cy="7" r="6.300" fill="#fff" stroke="#9cd0f0" stroke-width="1.100"/><circle cx="7" cy="3.900" r="1.250" fill="#1478d2"/><path d="M5.300 5.800h2.700v4h1v1.200H5v-1.200h1.100V7H5.300z" fill="#1478d2"/></svg>
<div class="t " style="left:612px;top:290.5px;font-size:10px;font-weight:bold;color:#d4d0c8;letter-spacing:.37px">Detailed information</div>
<div class="cap" style="left:1313.4px;top:288.7px"><svg class="a" style="left:0;top:0" width="14" height="12"><rect x="3.300" y="7.800" width="5.600" height="1.800" fill="#000"/></svg></div>
<div class="cap" style="left:1327.2px;top:288.7px"><svg class="a" style="left:0;top:0" width="14" height="12"><rect x="2.900" y="2" width="7.400" height="7.300" fill="none" stroke="#000" stroke-width="1"/><rect x="2.400" y="1.500" width="8.400" height="1.800" fill="#000"/></svg></div>
<div class="cap" style="left:1344.0px;top:288.7px"><svg class="a" style="left:0;top:0" width="14" height="12"><path d="M3.600 2.400L10 9.200M10 2.400L3.600 9.200" stroke="#000" stroke-width="1.500" fill="none"/></svg></div>
<div class="a " style="left:595px;top:304px;width:765px;height:411px;box-shadow:inset 1px 1px #808080,inset -1px -1px #fff,inset 2px 2px #404040,inset -2px -2px #d4d0c8"></div>
<div class="t " style="left:609px;top:325px;font-size:10px;">No.</div>
<div class="a " style="left:659px;top:321px;width:16px;height:17px;background:#d4d0c8;box-shadow:inset 1px 1px #808080,inset -1px -1px #fff,inset 2px 2px #404040"></div>
<div class="t " style="left:662px;top:325px;font-size:10px;">13</div>
<div class="t " style="left:609px;top:348.5px;font-size:10px;letter-spacing:-.2px">Subscriber</div>
<div class="a " style="left:659px;top:344.2px;width:686px;height:18.4px;background:#d4d0c8;box-shadow:inset 1px 1px #808080,inset -1px -1px #fff,inset 2px 2px #404040"></div>
<div class="t " style="left:661.5px;top:348.0px;font-size:11.3px;">Jack</div>
<div class="t " style="left:609px;top:372.8px;font-size:10px;letter-spacing:-.2px">Address</div>
<div class="a " style="left:659px;top:368.5px;width:686px;height:18.4px;background:#d4d0c8;box-shadow:inset 1px 1px #808080,inset -1px -1px #fff,inset 2px 2px #404040"></div>
<div class="t " style="left:661.5px;top:372.3px;font-size:11.3px;">Sea Street</div>
<div class="t " style="left:609px;top:397.1px;font-size:10px;letter-spacing:-.2px">Telephone</div>
<div class="a " style="left:659px;top:392.8px;width:686px;height:18.4px;background:#d4d0c8;box-shadow:inset 1px 1px #808080,inset -1px -1px #fff,inset 2px 2px #404040"></div>
<div class="t " style="left:661.5px;top:396.6px;font-size:11.3px;">123456789</div>
<div class="t " style="left:609px;top:421.40000000000003px;font-size:10px;letter-spacing:-.2px">Installer</div>
<div class="a " style="left:659px;top:417.1px;width:686px;height:18.4px;background:#d4d0c8;box-shadow:inset 1px 1px #808080,inset -1px -1px #fff,inset 2px 2px #404040"></div>
<div class="t " style="left:661.5px;top:420.90000000000003px;font-size:11.3px;">Jack</div>
<div class="a " style="left:613px;top:444px;width:58px;height:16px;box-shadow:inset 1px 1px #fff,inset -1px 0 #404040,inset -2px 0 #808080;border-radius:2px 2px 0 0"></div>
<div class="t " style="left:617px;top:447px;font-size:10px;letter-spacing:0px">Information</div>
<div class="a " style="left:672px;top:444px;width:54px;height:16px;box-shadow:inset 1px 1px #fff,inset -1px 0 #404040,inset -2px 0 #808080;border-radius:2px 2px 0 0"></div>
<div class="t " style="left:677px;top:447px;font-size:10px;letter-spacing:0px">Identifiers</div>
<div class="a " style="left:727px;top:444px;width:37px;height:16px;box-shadow:inset 1px 1px #fff,inset -1px 0 #404040,inset -2px 0 #808080;border-radius:2px 2px 0 0"></div>
<div class="t " style="left:731.5px;top:447px;font-size:10px;letter-spacing:-0.25px">Alarms</div>
<div class="a " style="left:813px;top:444px;width:49px;height:16px;box-shadow:inset 1px 1px #fff,inset -1px 0 #404040,inset -2px 0 #808080;border-radius:2px 2px 0 0"></div>
<div class="t " style="left:816.8px;top:447px;font-size:10px;letter-spacing:-0.1px">Partitions</div>
<div class="a " style="left:862px;top:444px;width:88px;height:16px;box-shadow:inset 1px 1px #fff,inset -1px 0 #404040,inset -2px 0 #808080;border-radius:2px 2px 0 0"></div>
<div class="t " style="left:867px;top:447px;font-size:10px;letter-spacing:-0.15px">Test transmissions</div>
<div class="a " style="left:610px;top:459px;width:735px;height:209px;box-shadow:inset 1px 1px #fff,inset -1px -1px #404040,inset -2px -2px #808080"></div>
<div class="a face" style="left:764px;top:442px;width:49px;height:19px;box-shadow:inset 1px 1px #fff,inset -1px 0 #404040,inset -2px 0 #808080;border-radius:2px 2px 0 0"></div>
<div class="t " style="left:769px;top:445.6px;font-size:10px;">Troubles</div>
<div class="a " style="left:612px;top:460px;width:731px;height:207px;background:#fff;box-shadow:inset 1px 1px #808080,inset 2px 2px #404040"></div>
<div class="a " style="left:614px;top:462.2px;width:727px;height:18.3px;background:#0a246a"></div>
<div class="t " style="left:613px;top:467.1px;font-size:11.5px;color:#fff">2011-03-28 12:53:55</div>
<div class="t " style="left:730px;top:467.1px;font-size:11.5px;color:#fff">2424</div>
<div class="t " style="left:775px;top:467.1px;font-size:11.5px;color:#fff;font-weight:bold;letter-spacing:-.16px">Communications Trouble(RECEIVER and TRANSMITTER)</div>
<div class="t " style="left:1226px;top:467.1px;font-size:11.5px;color:#fff;font-weight:bold;font-style:italic">Active</div>
<div class="t " style="left:613px;top:485px;font-size:11.5px;color:#000">2011-03-28 12:54:06</div>
<div class="t " style="left:730px;top:485px;font-size:11.5px;color:#000">2424</div>
<div class="t " style="left:775px;top:485px;font-size:11.5px;color:#000;font-weight:bold;letter-spacing:-.16px">Communications Trouble(RECEIVER and TRANSMITTER)</div>
<div class="t " style="left:1226px;top:485px;font-size:11.5px;color:#000;font-weight:bold;font-style:italic">Active</div>
<div class="a btn" style="left:983px;top:683px;width:60px;height:22px;"></div>
<div class="t" style="left:983px;top:689.300px;width:60px;text-align:center;font-size:10px;color:#8e8c88;text-shadow:1px 1px #fff">Handle</div>
<div class="a btn" style="left:1047px;top:683px;width:52px;height:22px;"></div>
<div class="t" style="left:1047px;top:689.300px;width:52px;text-align:center;font-size:10px;color:#000">Delete</div>
<div class="a btn" style="left:1103px;top:683px;width:71px;height:22px;"></div>
<div class="t" style="left:1103px;top:689.300px;width:71px;text-align:center;font-size:10px;color:#000">Delete all</div>
<div class="a btn" style="left:1177px;top:683px;width:55px;height:22px;"></div>
<div class="t" style="left:1177px;top:689.300px;width:55px;text-align:center;font-size:10px;color:#000">Filter</div>
<div class="a btn" style="left:1236px;top:683px;width:52px;height:22px;"></div>
<div class="t" style="left:1236px;top:689.300px;width:52px;text-align:center;font-size:10px;color:#000">Plans</div>
<div class="a btn" style="left:1294px;top:683px;width:56px;height:22px;"></div>
<div class="t" style="left:1294px;top:689.300px;width:56px;text-align:center;font-size:10px;color:#000">Close</div>
<div class="a " style="left:1147.5px;top:697.2px;width:5px;height:1px;background:#000"></div>
<div class="a " style="left:1196px;top:697.2px;width:5px;height:1px;background:#000"></div>
<div class="a win" style="left:760.2px;top:25.4px;width:559.8px;height:301.2px;"></div>
<div class="a tba" style="left:763.2px;top:28.8px;width:553.8px;height:15.9px;"></div>
<svg class="a" style="left:765px;top:30px" width="14" height="14" viewBox="0 0 14 14"><circle cx="7" cy="7" r="6.300" fill="#fff" stroke="#9cd0f0" stroke-width="1.100"/><circle cx="7" cy="3.900" r="1.250" fill="#1478d2"/><path d="M5.300 5.800h2.700v4h1v1.200H5v-1.200h1.100V7H5.300z" fill="#1478d2"/></svg>
<div class="t " style="left:781px;top:32.5px;font-size:10px;font-weight:bold;color:#fff;letter-spacing:.36px">Status board</div>
<div class="cap" style="left:1270px;top:30.5px"><svg class="a" style="left:0;top:0" width="14" height="12"><rect x="3.300" y="7.800" width="5.600" height="1.800" fill="#000"/></svg></div>
<div class="cap" style="left:1283.8px;top:30.5px"><svg class="a" style="left:0;top:0" width="14" height="12"><rect x="2.900" y="2" width="7.400" height="7.300" fill="none" stroke="#000" stroke-width="1"/><rect x="2.400" y="1.500" width="8.400" height="1.800" fill="#000"/></svg></div>
<div class="cap" style="left:1300.6px;top:30.5px"><svg class="a" style="left:0;top:0" width="14" height="12"><path d="M3.600 2.400L10 9.200M10 2.400L3.600 9.200" stroke="#000" stroke-width="1.500" fill="none"/></svg></div>
<div class="a " style="left:764px;top:46px;width:553px;height:214px;box-shadow:inset 1px 1px #808080,inset -1px -1px #fff"></div>
<div class="a dith" style="left:1301px;top:48px;width:14px;height:210px;"></div>
<div class="a btn" style="left:1301px;top:47.5px;width:14px;height:14px;"><svg class="a" style="left:0;top:0" width="14" height="15"><path d="M3.500 8.500h7L7 5z" fill="#000"/></svg></div>
<div class="a btn" style="left:1301px;top:244.5px;width:14px;height:14px;"><svg class="a" style="left:0;top:0" width="14" height="14"><path d="M3.500 5.500h7L7 9z" fill="#000"/></svg></div>
<div class="a" style="left:769.5px;top:52.2px;width:46.500px;height:28.500px;background:#d6d2ca;border:1px solid #c2c0c4"><div class="t" style="left:3.600px;top:5px;font-style:italic;font-weight:bold;font-size:7.900px;transform:skewX(-8deg);color:#000;text-shadow:.35px 0 #000">sys</div><svg class="a" style="left:19.5px;top:7.2px" width="23" height="13.300" viewBox="0 0 23 14" preserveAspectRatio="none" overflow="visible"><path d="M1 7C4.500 2.200 9 .900 11.500 .900S18.500 2.200 22 7C18.500 11.800 14 13.100 11.500 13.100S4.500 11.800 1 7z" fill="#fff" stroke="#7e7e7e" stroke-width="2.100"/><circle cx="11.500" cy="6.800" r="3.600" fill="#c6c6c6" stroke="#808080" stroke-width="1.500"/><path d="M10.200 5.700c0-1.800 2.800-1.800 2.800-.1 0 1.100-1.300 1.200-1.300 2.300M11.700 9.100v.9" stroke="#747474" stroke-width="1.100" fill="none"/></svg></div>
<div class="a" style="left:821.8px;top:52.2px;width:46.500px;height:28.500px;background:#d6d2ca;border:1px solid #c2c0c4"><div class="t" style="left:.600px;top:2.800px;font-size:8.700px;transform:scaleX(.9);transform-origin:0 0;color:#000;text-shadow:.35px 0 #000">0001</div><svg class="a" style="left:21.2px;top:7.8px" width="22.3" height="13.300" viewBox="0 0 23 14" preserveAspectRatio="none" overflow="visible"><path d="M1 7C4.500 2.200 9 .900 11.500 .900S18.500 2.200 22 7C18.500 11.800 14 13.100 11.500 13.100S4.500 11.800 1 7z" fill="#fff" stroke="#0c9a34" stroke-width="2"/></svg></div>
<div class="a" style="left:874.0px;top:52.2px;width:46.500px;height:28.500px;background:#d6d2ca;border:1px solid #c2c0c4"><div class="t" style="left:.600px;top:2.800px;font-size:8.700px;transform:scaleX(.9);transform-origin:0 0;color:#000;text-shadow:.35px 0 #000">0002</div><svg class="a" style="left:21.2px;top:7.2px" width="22.3" height="13.300" viewBox="0 0 23 14" preserveAspectRatio="none" overflow="visible"><path d="M1 7C4.500 2.200 9 .900 11.500 .900S18.500 2.200 22 7C18.500 11.800 14 13.100 11.500 13.100S4.500 11.800 1 7z" fill="#fff" stroke="#7e7e7e" stroke-width="2.100"/><circle cx="11.500" cy="6.800" r="3.600" fill="#c6c6c6" stroke="#808080" stroke-width="1.500"/><path d="M10.200 5.700c0-1.800 2.800-1.800 2.800-.1 0 1.100-1.300 1.200-1.300 2.300M11.700 9.100v.9" stroke="#747474" stroke-width="1.100" fill="none"/></svg></div>
<div class="a" style="left:926.2px;top:52.2px;width:46.500px;height:28.500px;background:#d6d2ca;border:1px solid #c2c0c4"><div class="t" style="left:.600px;top:2.800px;font-size:8.700px;transform:scaleX(.9);transform-origin:0 0;color:#000;text-shadow:.35px 0 #000">0003</div><svg class="a" style="left:21.2px;top:7.2px" width="22.3" height="13.300" viewBox="0 0 23 14" preserveAspectRatio="none" overflow="visible"><path d="M1 7C4.500 2.200 9 .900 11.500 .900S18.500 2.200 22 7C18.500 11.800 14 13.100 11.500 13.100S4.500 11.800 1 7z" fill="#fff" stroke="#7e7e7e" stroke-width="2.100"/><circle cx="11.500" cy="6.800" r="3.600" fill="#c6c6c6" stroke="#808080" stroke-width="1.500"/><path d="M10.200 5.700c0-1.800 2.800-1.800 2.800-.1 0 1.100-1.300 1.200-1.300 2.300M11.700 9.100v.9" stroke="#747474" stroke-width="1.100" fill="none"/></svg></div>
<div class="a" style="left:978.5px;top:52.2px;width:46.500px;height:28.500px;background:#d6d2ca;border:1px solid #c2c0c4"><div class="t" style="left:.600px;top:2.800px;font-size:8.700px;transform:scaleX(.9);transform-origin:0 0;color:#000;text-shadow:.35px 0 #000">0004</div><svg class="a" style="left:21.2px;top:7.2px" width="22.3" height="13.300" viewBox="0 0 23 14" preserveAspectRatio="none" overflow="visible"><path d="M1 7C4.500 2.200 9 .900 11.500 .900S18.500 2.200 22 7C18.500 11.800 14 13.100 11.500 13.100S4.500 11.800 1 7z" fill="#fff" stroke="#7e7e7e" stroke-width="2.100"/><circle cx="11.500" cy="6.800" r="3.600" fill="#c6c6c6" stroke="#808080" stroke-width="1.500"/><path d="M10.200 5.700c0-1.800 2.800-1.800 2.800-.1 0 1.100-1.300 1.200-1.300 2.300M11.700 9.100v.9" stroke="#747474" stroke-width="1.100" fill="none"/></svg></div>
<div class="a" style="left:1030.8px;top:52.2px;width:46.500px;height:28.500px;background:#d6d2ca;border:1px solid #c2c0c4"><div class="t" style="left:.600px;top:2.800px;font-size:8.700px;transform:scaleX(.9);transform-origin:0 0;color:#000;text-shadow:.35px 0 #000">0005</div><svg class="a" style="left:21.2px;top:7.2px" width="22.3" height="13.300" viewBox="0 0 23 14" preserveAspectRatio="none" overflow="visible"><path d="M1 7C4.500 2.200 9 .900 11.500 .900S18.500 2.200 22 7C18.500 11.800 14 13.100 11.500 13.100S4.500 11.800 1 7z" fill="#fff" stroke="#c4c2be" stroke-width="1.400"/></svg></div>
<div class="a" style="left:1083.0px;top:52.2px;width:46.500px;height:28.500px;background:#d6d2ca;border:1px solid #c2c0c4"><div class="t" style="left:.600px;top:2.800px;font-size:8.700px;transform:scaleX(.9);transform-origin:0 0;color:#000;text-shadow:.35px 0 #000">0006</div><svg class="a" style="left:21.2px;top:7.2px" width="22.3" height="13.300" viewBox="0 0 23 14" preserveAspectRatio="none" overflow="visible"><path d="M1 7C4.500 2.200 9 .900 11.500 .900S18.500 2.200 22 7C18.500 11.800 14 13.100 11.500 13.100S4.500 11.800 1 7z" fill="#fff" stroke="#7e7e7e" stroke-width="2.100"/><circle cx="11.500" cy="6.800" r="3.600" fill="#c6c6c6" stroke="#808080" stroke-width="1.500"/><path d="M10.200 5.700c0-1.800 2.800-1.800 2.800-.1 0 1.100-1.300 1.200-1.300 2.300M11.700 9.100v.9" stroke="#747474" stroke-width="1.100" fill="none"/></svg></div>
<div class="a" style="left:1135.2px;top:52.2px;width:46.500px;height:28.500px;background:#d6d2ca;border:1px solid #c2c0c4"><div class="t" style="left:.600px;top:2.800px;font-size:8.700px;transform:scaleX(.9);transform-origin:0 0;color:#000;text-shadow:.35px 0 #000">0007</div><svg class="a" style="left:21.2px;top:7.2px" width="22.3" height="13.300" viewBox="0 0 23 14" preserveAspectRatio="none" overflow="visible"><path d="M1 7C4.500 2.200 9 .900 11.500 .900S18.500 2.200 22 7C18.500 11.800 14 13.100 11.500 13.100S4.500 11.800 1 7z" fill="#f2ea5c" stroke="#d4c400" stroke-width="1.900"/><circle cx="11.500" cy="6.900" r="3.600" fill="#d2c000"/></svg></div>
<div class="a" style="left:1187.5px;top:52.2px;width:46.500px;height:28.500px;background:#d6d2ca;border:1px solid #c2c0c4"><div class="t" style="left:.600px;top:2.800px;font-size:8.700px;transform:scaleX(.9);transform-origin:0 0;color:#000;text-shadow:.35px 0 #000">0008</div><svg class="a" style="left:21.2px;top:7.2px" width="22.3" height="13.300" viewBox="0 0 23 14" preserveAspectRatio="none" overflow="visible"><path d="M1 7C4.500 2.200 9 .900 11.500 .900S18.500 2.200 22 7C18.500 11.800 14 13.100 11.500 13.100S4.500 11.800 1 7z" fill="#fff" stroke="#7e7e7e" stroke-width="2.100"/><circle cx="11.500" cy="6.800" r="3.600" fill="#c6c6c6" stroke="#808080" stroke-width="1.500"/><path d="M10.200 5.700c0-1.800 2.800-1.800 2.800-.1 0 1.100-1.300 1.200-1.300 2.300M11.700 9.100v.9" stroke="#747474" stroke-width="1.100" fill="none"/></svg></div>
<div class="a" style="left:1239.8px;top:52.2px;width:46.500px;height:28.500px;background:#d6d2ca;border:1px solid #c2c0c4"><div class="t" style="left:.600px;top:2.800px;font-size:8.700px;transform:scaleX(.9);transform-origin:0 0;color:#000;text-shadow:.35px 0 #000">0009</div><svg class="a" style="left:21.2px;top:7.8px" width="22.3" height="13.300" viewBox="0 0 23 14" preserveAspectRatio="none" overflow="visible"><path d="M1 7C4.500 2.200 9 .900 11.500 .900S18.500 2.200 22 7C18.500 11.800 14 13.100 11.500 13.100S4.500 11.800 1 7z" fill="#fff" stroke="#0c9a34" stroke-width="2"/></svg></div>
<div class="a" style="left:769.5px;top:86.6px;width:46.500px;height:28.500px;background:#d6d2ca;border:1px solid #c2c0c4"><div class="t" style="left:.600px;top:2.800px;font-size:8.700px;transform:scaleX(.9);transform-origin:0 0;color:#000;text-shadow:.35px 0 #000">0010</div><svg class="a" style="left:21.2px;top:7.8px" width="22.3" height="13.300" viewBox="0 0 23 14" preserveAspectRatio="none" overflow="visible"><path d="M1 7C4.500 2.200 9 .900 11.500 .900S18.500 2.200 22 7C18.500 11.800 14 13.100 11.500 13.100S4.500 11.800 1 7z" fill="#fff" stroke="#0c9a34" stroke-width="2"/></svg></div>
<div class="a" style="left:821.8px;top:86.6px;width:46.500px;height:28.500px;background:#d6d2ca;border:1px solid #c2c0c4"><div class="t" style="left:.600px;top:2.800px;font-size:8.700px;transform:scaleX(.9);transform-origin:0 0;color:#000;text-shadow:.35px 0 #000">0011</div><svg class="a" style="left:21.2px;top:7.2px" width="22.3" height="13.300" viewBox="0 0 23 14" preserveAspectRatio="none" overflow="visible"><path d="M1 7C4.500 2.200 9 .900 11.500 .900S18.500 2.200 22 7C18.500 11.800 14 13.100 11.500 13.100S4.500 11.800 1 7z" fill="#fff" stroke="#7e7e7e" stroke-width="2.100"/><circle cx="11.500" cy="6.800" r="3.600" fill="#c6c6c6" stroke="#808080" stroke-width="1.500"/><path d="M10.200 5.700c0-1.800 2.800-1.800 2.800-.1 0 1.100-1.300 1.200-1.300 2.300M11.700 9.100v.9" stroke="#747474" stroke-width="1.100" fill="none"/></svg></div>
<div class="a" style="left:874.0px;top:86.6px;width:46.500px;height:28.500px;background:#d6d2ca;border:1px solid #c2c0c4"><div class="t" style="left:.600px;top:2.800px;font-size:8.700px;transform:scaleX(.9);transform-origin:0 0;color:#000;text-shadow:.35px 0 #000">0012</div><svg class="a" style="left:21.2px;top:7.2px" width="22.3" height="13.300" viewBox="0 0 23 14" preserveAspectRatio="none" overflow="visible"><path d="M1 7C4.500 2.200 9 .900 11.500 .900S18.500 2.200 22 7C18.500 11.800 14 13.100 11.500 13.100S4.500 11.800 1 7z" fill="#fff" stroke="#7e7e7e" stroke-width="2.100"/><circle cx="11.500" cy="6.800" r="3.600" fill="#c6c6c6" stroke="#808080" stroke-width="1.500"/><path d="M10.200 5.700c0-1.800 2.800-1.800 2.800-.1 0 1.100-1.300 1.200-1.300 2.300M11.700 9.100v.9" stroke="#747474" stroke-width="1.100" fill="none"/></svg></div>
<div class="a" style="left:926.2px;top:86.6px;width:46.500px;height:28.500px;background:#d6d2ca;border:1px solid #c2c0c4"><div class="t" style="left:.600px;top:2.800px;font-size:8.700px;transform:scaleX(.9);transform-origin:0 0;color:#000;text-shadow:.35px 0 #000">0013</div><svg class="a" style="left:21.2px;top:7.2px" width="22.3" height="13.300" viewBox="0 0 23 14" preserveAspectRatio="none" overflow="visible"><path d="M1 7C4.500 2.200 9 .900 11.500 .900S18.500 2.200 22 7C18.500 11.800 14 13.100 11.500 13.100S4.500 11.800 1 7z" fill="#fff" stroke="#7e7e7e" stroke-width="2.100"/><circle cx="11.500" cy="6.800" r="3.600" fill="#c6c6c6" stroke="#808080" stroke-width="1.500"/><path d="M10.200 5.700c0-1.800 2.800-1.800 2.800-.1 0 1.100-1.300 1.200-1.300 2.300M11.700 9.100v.9" stroke="#747474" stroke-width="1.100" fill="none"/></svg></div>
<div class="a" style="left:978.5px;top:86.6px;width:46.500px;height:28.500px;background:#d6d2ca;border:1px solid #c2c0c4"><div class="t" style="left:.600px;top:2.800px;font-size:8.700px;transform:scaleX(.9);transform-origin:0 0;color:#000;text-shadow:.35px 0 #000">0014</div><svg class="a" style="left:21.2px;top:7.2px" width="22.3" height="13.300" viewBox="0 0 23 14" preserveAspectRatio="none" overflow="visible"><path d="M1 7C4.500 2.200 9 .900 11.500 .900S18.500 2.200 22 7C18.500 11.800 14 13.100 11.500 13.100S4.500 11.800 1 7z" fill="#fff" stroke="#7e7e7e" stroke-width="2.100"/><circle cx="11.500" cy="6.800" r="3.600" fill="#c6c6c6" stroke="#808080" stroke-width="1.500"/><path d="M10.200 5.700c0-1.800 2.800-1.800 2.800-.1 0 1.100-1.300 1.200-1.300 2.300M11.700 9.100v.9" stroke="#747474" stroke-width="1.100" fill="none"/></svg></div>
<div class="a" style="left:1030.8px;top:86.6px;width:46.500px;height:28.500px;background:#d6d2ca;border:1px solid #c2c0c4"><div class="t" style="left:.600px;top:2.800px;font-size:8.700px;transform:scaleX(.9);transform-origin:0 0;color:#000;text-shadow:.35px 0 #000">0015</div><svg class="a" style="left:21.2px;top:7.2px" width="22.3" height="13.300" viewBox="0 0 23 14" preserveAspectRatio="none" overflow="visible"><path d="M1 7C4.500 2.200 9 .900 11.500 .900S18.500 2.200 22 7C18.500 11.800 14 13.100 11.500 13.100S4.500 11.800 1 7z" fill="#fff" stroke="#7e7e7e" stroke-width="2.100"/><circle cx="11.500" cy="6.800" r="3.600" fill="#c6c6c6" stroke="#808080" stroke-width="1.500"/><path d="M10.200 5.700c0-1.800 2.800-1.800 2.800-.1 0 1.100-1.300 1.200-1.300 2.300M11.700 9.100v.9" stroke="#747474" stroke-width="1.100" fill="none"/></svg></div>
<div class="a" style="left:1083.0px;top:86.6px;width:46.500px;height:28.500px;background:#d6d2ca;border:1px solid #c2c0c4"><div class="t" style="left:.600px;top:2.800px;font-size:8.700px;transform:scaleX(.9);transform-origin:0 0;color:#000;text-shadow:.35px 0 #000">0016</div><svg class="a" style="left:21.2px;top:7.2px" width="22.3" height="13.300" viewBox="0 0 23 14" preserveAspectRatio="none" overflow="visible"><path d="M1 7C4.500 2.200 9 .900 11.500 .900S18.500 2.200 22 7C18.500 11.800 14 13.100 11.500 13.100S4.500 11.800 1 7z" fill="#fff" stroke="#7e7e7e" stroke-width="2.100"/><circle cx="11.500" cy="6.800" r="3.600" fill="#c6c6c6" stroke="#808080" stroke-width="1.500"/><path d="M10.200 5.700c0-1.800 2.800-1.800 2.800-.1 0 1.100-1.300 1.200-1.300 2.300M11.700 9.100v.9" stroke="#747474" stroke-width="1.100" fill="none"/></svg></div>
<div class="a" style="left:1135.2px;top:86.6px;width:46.500px;height:28.500px;background:#d6d2ca;border:1px solid #c2c0c4"><div class="t" style="left:.600px;top:2.800px;font-size:8.700px;transform:scaleX(.9);transform-origin:0 0;color:#000;text-shadow:.35px 0 #000">0017</div><svg class="a" style="left:21.2px;top:7.2px" width="22.3" height="13.300" viewBox="0 0 23 14" preserveAspectRatio="none" overflow="visible"><path d="M1 7C4.500 2.200 9 .900 11.500 .900S18.500 2.200 22 7C18.500 11.800 14 13.100 11.500 13.100S4.500 11.800 1 7z" fill="#fff" stroke="#7e7e7e" stroke-width="2.100"/><circle cx="11.500" cy="6.800" r="3.600" fill="#c6c6c6" stroke="#808080" stroke-width="1.500"/><path d="M10.200 5.700c0-1.800 2.800-1.800 2.800-.1 0 1.100-1.300 1.200-1.300 2.300M11.700 9.100v.9" stroke="#747474" stroke-width="1.100" fill="none"/></svg></div>
<div class="a" style="left:1187.5px;top:86.6px;width:46.500px;height:28.500px;background:#d6d2ca;border:1px solid #c2c0c4"><div class="t" style="left:.600px;top:2.800px;font-size:8.700px;transform:scaleX(.9);transform-origin:0 0;color:#000;text-shadow:.35px 0 #000">0018</div><svg class="a" style="left:21.2px;top:7.2px" width="22.3" height="13.300" viewBox="0 0 23 14" preserveAspectRatio="none" overflow="visible"><path d="M1 7C4.500 2.200 9 .900 11.500 .900S18.500 2.200 22 7C18.500 11.800 14 13.100 11.500 13.100S4.500 11.800 1 7z" fill="#fff" stroke="#7e7e7e" stroke-width="2.100"/><circle cx="11.500" cy="6.800" r="3.600" fill="#c6c6c6" stroke="#808080" stroke-width="1.500"/><path d="M10.200 5.700c0-1.800 2.800-1.800 2.800-.1 0 1.100-1.300 1.200-1.300 2.300M11.700 9.100v.9" stroke="#747474" stroke-width="1.100" fill="none"/></svg></div>
<div class="a" style="left:1239.8px;top:86.6px;width:46.500px;height:28.500px;background:#d6d2ca;border:1px solid #c2c0c4"><div class="t" style="left:.600px;top:2.800px;font-size:8.700px;transform:scaleX(.9);transform-origin:0 0;color:#000;text-shadow:.35px 0 #000">0019</div><svg class="a" style="left:21.2px;top:7.2px" width="22.3" height="13.300" viewBox="0 0 23 14" preserveAspectRatio="none" overflow="visible"><path d="M1 7C4.500 2.200 9 .900 11.500 .900S18.500 2.200 22 7C18.500 11.800 14 13.100 11.500 13.100S4.500 11.800 1 7z" fill="#fff" stroke="#7e7e7e" stroke-width="2.100"/><circle cx="11.500" cy="6.800" r="3.600" fill="#c6c6c6" stroke="#808080" stroke-width="1.500"/><path d="M10.200 5.700c0-1.800 2.800-1.800 2.800-.1 0 1.100-1.300 1.200-1.300 2.300M11.700 9.100v.9" stroke="#747474" stroke-width="1.100" fill="none"/></svg></div>
<div class="a" style="left:769.5px;top:121.0px;width:46.500px;height:28.500px;background:#d6d2ca;border:1px solid #c2c0c4"><div class="t" style="left:.600px;top:2.800px;font-size:8.700px;transform:scaleX(.9);transform-origin:0 0;color:#000;text-shadow:.35px 0 #000">0020</div><svg class="a" style="left:21.2px;top:7.2px" width="22.3" height="13.300" viewBox="0 0 23 14" preserveAspectRatio="none" overflow="visible"><path d="M1 7C4.500 2.200 9 .900 11.500 .900S18.500 2.200 22 7C18.500 11.800 14 13.100 11.500 13.100S4.500 11.800 1 7z" fill="#fff" stroke="#7e7e7e" stroke-width="2.100"/><circle cx="11.500" cy="6.800" r="3.600" fill="#c6c6c6" stroke="#808080" stroke-width="1.500"/><path d="M10.200 5.700c0-1.800 2.800-1.800 2.800-.1 0 1.100-1.300 1.200-1.300 2.300M11.700 9.100v.9" stroke="#747474" stroke-width="1.100" fill="none"/></svg></div>
<div class="a" style="left:821.8px;top:121.0px;width:46.500px;height:28.500px;background:#d6d2ca;border:1px solid #c2c0c4"><div class="t" style="left:.600px;top:2.800px;font-size:8.700px;transform:scaleX(.9);transform-origin:0 0;color:#000;text-shadow:.35px 0 #000">0021</div><svg class="a" style="left:21.2px;top:7.2px" width="22.3" height="13.300" viewBox="0 0 23 14" preserveAspectRatio="none" overflow="visible"><path d="M1 7C4.500 2.200 9 .900 11.500 .900S18.500 2.200 22 7C18.500 11.800 14 13.100 11.500 13.100S4.500 11.800 1 7z" fill="#fff" stroke="#7e7e7e" stroke-width="2.100"/><circle cx="11.500" cy="6.800" r="3.600" fill="#c6c6c6" stroke="#808080" stroke-width="1.500"/><path d="M10.200 5.700c0-1.800 2.800-1.800 2.800-.1 0 1.100-1.300 1.200-1.300 2.300M11.700 9.100v.9" stroke="#747474" stroke-width="1.100" fill="none"/></svg></div>
<div class="a" style="left:874.0px;top:121.0px;width:46.500px;height:28.500px;background:#d6d2ca;border:1px solid #c2c0c4"><div class="t" style="left:.600px;top:2.800px;font-size:8.700px;transform:scaleX(.9);transform-origin:0 0;color:#000;text-shadow:.35px 0 #000">0022</div><svg class="a" style="left:21.2px;top:7.8px" width="22.3" height="13.300" viewBox="0 0 23 14" preserveAspectRatio="none" overflow="visible"><path d="M1 7C4.500 2.200 9 .900 11.500 .900S18.500 2.200 22 7C18.500 11.800 14 13.100 11.500 13.100S4.500 11.800 1 7z" fill="#fff" stroke="#0c9a34" stroke-width="2"/></svg></div>
<div class="a" style="left:926.2px;top:121.0px;width:46.500px;height:28.500px;background:#d6d2ca;border:1px solid #c2c0c4"><div class="t" style="left:.600px;top:2.800px;font-size:8.700px;transform:scaleX(.9);transform-origin:0 0;color:#000;text-shadow:.35px 0 #000">0023</div><svg class="a" style="left:21.2px;top:7.8px" width="22.3" height="13.300" viewBox="0 0 23 14" preserveAspectRatio="none" overflow="visible"><path d="M1 7C4.500 2.200 9 .900 11.500 .900S18.500 2.200 22 7C18.500 11.800 14 13.100 11.500 13.100S4.500 11.800 1 7z" fill="#fff" stroke="#0c9a34" stroke-width="2"/></svg></div>
<div class="a" style="left:978.5px;top:121.0px;width:46.500px;height:28.500px;background:#d6d2ca;border:1px solid #c2c0c4"><div class="t" style="left:.600px;top:2.800px;font-size:8.700px;transform:scaleX(.9);transform-origin:0 0;color:#000;text-shadow:.35px 0 #000">0024</div><svg class="a" style="left:21.2px;top:7.2px" width="22.3" height="13.300" viewBox="0 0 23 14" preserveAspectRatio="none" overflow="visible"><path d="M1 7C4.500 2.200 9 .900 11.500 .900S18.500 2.200 22 7C18.500 11.800 14 13.100 11.500 13.100S4.500 11.800 1 7z" fill="#fff" stroke="#7e7e7e" stroke-width="2.100"/><circle cx="11.500" cy="6.800" r="3.600" fill="#c6c6c6" stroke="#808080" stroke-width="1.500"/><path d="M10.200 5.700c0-1.800 2.800-1.800 2.800-.1 0 1.100-1.300 1.200-1.300 2.300M11.700 9.100v.9" stroke="#747474" stroke-width="1.100" fill="none"/></svg></div>
<div class="a" style="left:1030.8px;top:121.0px;width:46.500px;height:28.500px;background:#d6d2ca;border:1px solid #c2c0c4"><div class="t" style="left:.600px;top:2.800px;font-size:8.700px;transform:scaleX(.9);transform-origin:0 0;color:#000;text-shadow:.35px 0 #000">0025</div><svg class="a" style="left:21.2px;top:7.2px" width="22.3" height="13.300" viewBox="0 0 23 14" preserveAspectRatio="none" overflow="visible"><rect x="7" y="6" width="10" height="9.500" fill="#dedcd8"/><path d="M7.500 6.500l9 8.700M16.500 6.500l-9 8.700" stroke="#fff" stroke-width="1.900" fill="none"/></svg></div>
<div class="a" style="left:1083.0px;top:121.0px;width:46.500px;height:28.500px;background:#d6d2ca;border:1px solid #c2c0c4"><div class="t" style="left:.600px;top:2.800px;font-size:8.700px;transform:scaleX(.9);transform-origin:0 0;color:#000;text-shadow:.35px 0 #000">0026</div><svg class="a" style="left:21.2px;top:7.2px" width="22.3" height="13.300" viewBox="0 0 23 14" preserveAspectRatio="none" overflow="visible"><path d="M1 7C4.500 2.200 9 .900 11.500 .900S18.500 2.200 22 7C18.500 11.800 14 13.100 11.500 13.100S4.500 11.800 1 7z" fill="#fff" stroke="#ee7a1c" stroke-width="1.900"/><circle cx="11.500" cy="6.800" r="3.900" fill="#ee7a1c"/><path d="M10.200 5.700c0-1.800 2.800-1.800 2.800-.1 0 1.100-1.300 1.200-1.300 2.300M11.700 9.100v.9" stroke="#fff" stroke-width="1" fill="none"/></svg></div>
<div class="a" style="left:1135.2px;top:121.0px;width:46.500px;height:28.500px;background:#d6d2ca;border:1px solid #c2c0c4"><div class="t" style="left:.600px;top:2.800px;font-size:8.700px;transform:scaleX(.9);transform-origin:0 0;color:#000;text-shadow:.35px 0 #000">0027</div><svg class="a" style="left:21.2px;top:7.2px" width="22.3" height="13.300" viewBox="0 0 23 14" preserveAspectRatio="none" overflow="visible"><path d="M1 7C4.500 2.200 9 .900 11.500 .900S18.500 2.200 22 7C18.500 11.800 14 13.100 11.500 13.100S4.500 11.800 1 7z" fill="#fff" stroke="#7e7e7e" stroke-width="2.100"/><circle cx="11.500" cy="6.800" r="3.600" fill="#c6c6c6" stroke="#808080" stroke-width="1.500"/><path d="M10.200 5.700c0-1.800 2.800-1.800 2.800-.1 0 1.100-1.300 1.200-1.300 2.300M11.700 9.100v.9" stroke="#747474" stroke-width="1.100" fill="none"/></svg></div>
<div class="a" style="left:1187.5px;top:121.0px;width:46.500px;height:28.500px;background:#d6d2ca;border:1px solid #c2c0c4"><div class="t" style="left:.600px;top:2.800px;font-size:8.700px;transform:scaleX(.9);transform-origin:0 0;color:#000;text-shadow:.35px 0 #000">0028</div><svg class="a" style="left:21.2px;top:7.2px" width="22.3" height="13.300" viewBox="0 0 23 14" preserveAspectRatio="none" overflow="visible"><path d="M1 7C4.500 2.200 9 .900 11.500 .900S18.500 2.200 22 7C18.500 11.800 14 13.100 11.500 13.100S4.500 11.800 1 7z" fill="#fff" stroke="#7e7e7e" stroke-width="2.100"/><circle cx="11.500" cy="6.800" r="3.600" fill="#c6c6c6" stroke="#808080" stroke-width="1.500"/><path d="M10.200 5.700c0-1.800 2.800-1.800 2.800-.1 0 1.100-1.300 1.200-1.300 2.300M11.700 9.100v.9" stroke="#747474" stroke-width="1.100" fill="none"/></svg></div>
<div class="a" style="left:1239.8px;top:121.0px;width:46.500px;height:28.500px;background:#d6d2ca;border:1px solid #c2c0c4"><div class="t" style="left:.600px;top:2.800px;font-size:8.700px;transform:scaleX(.9);transform-origin:0 0;color:#000;text-shadow:.35px 0 #000">0029</div><svg class="a" style="left:21.2px;top:7.2px" width="22.3" height="13.300" viewBox="0 0 23 14" preserveAspectRatio="none" overflow="visible"><path d="M1 7C4.500 2.200 9 .900 11.500 .900S18.500 2.200 22 7C18.500 11.800 14 13.100 11.500 13.100S4.500 11.800 1 7z" fill="#fff" stroke="#7e7e7e" stroke-width="2.100"/><circle cx="11.500" cy="6.800" r="3.600" fill="#c6c6c6" stroke="#808080" stroke-width="1.500"/><path d="M10.200 5.700c0-1.800 2.800-1.800 2.800-.1 0 1.100-1.300 1.200-1.300 2.300M11.700 9.100v.9" stroke="#747474" stroke-width="1.100" fill="none"/></svg></div>
<div class="a" style="left:769.5px;top:155.4px;width:46.500px;height:28.500px;background:#d6d2ca;border:1px solid #c2c0c4"><div class="t" style="left:.600px;top:2.800px;font-size:8.700px;transform:scaleX(.9);transform-origin:0 0;color:#000;text-shadow:.35px 0 #000">0030</div><svg class="a" style="left:21.2px;top:7.2px" width="22.3" height="13.300" viewBox="0 0 23 14" preserveAspectRatio="none" overflow="visible"><path d="M1 7C4.500 2.200 9 .900 11.500 .900S18.500 2.200 22 7C18.500 11.800 14 13.100 11.500 13.100S4.500 11.800 1 7z" fill="#fff" stroke="#7e7e7e" stroke-width="2.100"/><circle cx="11.500" cy="6.800" r="3.600" fill="#c6c6c6" stroke="#808080" stroke-width="1.500"/><path d="M10.200 5.700c0-1.800 2.800-1.800 2.800-.1 0 1.100-1.300 1.200-1.300 2.300M11.700 9.100v.9" stroke="#747474" stroke-width="1.100" fill="none"/></svg></div>
<div class="a" style="left:821.8px;top:155.4px;width:46.500px;height:28.500px;background:#d6d2ca;border:1px solid #c2c0c4"><div class="t" style="left:.600px;top:2.800px;font-size:8.700px;transform:scaleX(.9);transform-origin:0 0;color:#000;text-shadow:.35px 0 #000">0031</div><svg class="a" style="left:21.2px;top:7.2px" width="22.3" height="13.300" viewBox="0 0 23 14" preserveAspectRatio="none" overflow="visible"><path d="M1 7C4.500 2.200 9 .900 11.500 .900S18.500 2.200 22 7C18.500 11.800 14 13.100 11.500 13.100S4.500 11.800 1 7z" fill="#fff" stroke="#7e7e7e" stroke-width="2.100"/><circle cx="11.500" cy="6.800" r="3.600" fill="#c6c6c6" stroke="#808080" stroke-width="1.500"/><path d="M10.200 5.700c0-1.800 2.800-1.800 2.800-.1 0 1.100-1.300 1.200-1.300 2.300M11.700 9.100v.9" stroke="#747474" stroke-width="1.100" fill="none"/></svg></div>
<div class="a" style="left:874.0px;top:155.4px;width:46.500px;height:28.500px;background:#d6d2ca;border:1px solid #c2c0c4"><div class="t" style="left:.600px;top:2.800px;font-size:8.700px;transform:scaleX(.9);transform-origin:0 0;color:#000;text-shadow:.35px 0 #000">0032</div><svg class="a" style="left:21.2px;top:7.2px" width="22.3" height="13.300" viewBox="0 0 23 14" preserveAspectRatio="none" overflow="visible"><path d="M1 7C4.500 2.200 9 .900 11.500 .900S18.500 2.200 22 7C18.500 11.800 14 13.100 11.500 13.100S4.500 11.800 1 7z" fill="#fff" stroke="#7e7e7e" stroke-width="2.100"/><circle cx="11.500" cy="6.800" r="3.600" fill="#c6c6c6" stroke="#808080" stroke-width="1.500"/><path d="M10.200 5.700c0-1.800 2.800-1.800 2.800-.1 0 1.100-1.300 1.200-1.300 2.300M11.700 9.100v.9" stroke="#747474" stroke-width="1.100" fill="none"/></svg></div>
<div class="a" style="left:926.2px;top:155.4px;width:46.500px;height:28.500px;background:#d6d2ca;border:1px solid #c2c0c4"><div class="t" style="left:.600px;top:2.800px;font-size:8.700px;transform:scaleX(.9);transform-origin:0 0;color:#000;text-shadow:.35px 0 #000">0033</div><svg class="a" style="left:21.2px;top:7.2px" width="22.3" height="13.300" viewBox="0 0 23 14" preserveAspectRatio="none" overflow="visible"><path d="M1 7C4.500 2.200 9 .900 11.500 .900S18.500 2.200 22 7C18.500 11.800 14 13.100 11.500 13.100S4.500 11.800 1 7z" fill="#fff" stroke="#7e7e7e" stroke-width="2.100"/><circle cx="11.500" cy="6.800" r="3.600" fill="#c6c6c6" stroke="#808080" stroke-width="1.500"/><path d="M10.200 5.700c0-1.800 2.800-1.800 2.800-.1 0 1.100-1.300 1.200-1.300 2.300M11.700 9.100v.9" stroke="#747474" stroke-width="1.100" fill="none"/></svg></div>
<div class="a" style="left:978.5px;top:155.4px;width:46.500px;height:28.500px;background:#d6d2ca;border:1px solid #c2c0c4"><div class="t" style="left:.600px;top:2.800px;font-size:8.700px;transform:scaleX(.9);transform-origin:0 0;color:#000;text-shadow:.35px 0 #000">0034</div><svg class="a" style="left:21.2px;top:7.2px" width="22.3" height="13.300" viewBox="0 0 23 14" preserveAspectRatio="none" overflow="visible"><path d="M1 7C4.500 2.200 9 .900 11.500 .900S18.500 2.200 22 7C18.500 11.800 14 13.100 11.500 13.100S4.500 11.800 1 7z" fill="#fff" stroke="#7e7e7e" stroke-width="2.100"/><circle cx="11.500" cy="6.800" r="3.600" fill="#c6c6c6" stroke="#808080" stroke-width="1.500"/><path d="M10.200 5.700c0-1.800 2.800-1.800 2.800-.1 0 1.100-1.300 1.200-1.300 2.300M11.700 9.100v.9" stroke="#747474" stroke-width="1.100" fill="none"/></svg></div>
<div class="a" style="left:1030.8px;top:155.4px;width:46.500px;height:28.500px;background:#0a246a;border:1px solid #0a246a"><div class="t" style="left:.600px;top:2.800px;font-size:8.700px;transform:scaleX(.9);transform-origin:0 0;color:#fff;text-shadow:.35px 0 #fff">0035</div><svg class="a" style="left:21.2px;top:7.2px" width="22.3" height="13.300" viewBox="0 0 23 14" preserveAspectRatio="none" overflow="visible"><path d="M1 7C4.500 2.200 9 .900 11.500 .900S18.500 2.200 22 7C18.500 11.800 14 13.100 11.500 13.100S4.500 11.800 1 7z" fill="#fff" stroke="#ee7a1c" stroke-width="1.900"/><circle cx="11.500" cy="6.800" r="3.900" fill="#ee7a1c"/><path d="M10.200 5.700c0-1.800 2.800-1.800 2.800-.1 0 1.100-1.300 1.200-1.300 2.300M11.700 9.100v.9" stroke="#fff" stroke-width="1" fill="none"/></svg></div>
<div class="a" style="left:1083.0px;top:155.4px;width:46.500px;height:28.500px;background:#d6d2ca;border:1px solid #c2c0c4"><div class="t" style="left:.600px;top:2.800px;font-size:8.700px;transform:scaleX(.9);transform-origin:0 0;color:#000;text-shadow:.35px 0 #000">0036</div><svg class="a" style="left:21.2px;top:7.2px" width="22.3" height="13.300" viewBox="0 0 23 14" preserveAspectRatio="none" overflow="visible"><path d="M1 7C4.500 2.200 9 .900 11.500 .900S18.500 2.200 22 7C18.500 11.800 14 13.100 11.500 13.100S4.500 11.800 1 7z" fill="#fff" stroke="#7e7e7e" stroke-width="2.100"/><circle cx="11.500" cy="6.800" r="3.600" fill="#c6c6c6" stroke="#808080" stroke-width="1.500"/><path d="M10.200 5.700c0-1.800 2.800-1.800 2.800-.1 0 1.100-1.300 1.200-1.300 2.300M11.700 9.100v.9" stroke="#747474" stroke-width="1.100" fill="none"/></svg></div>
<div class="a" style="left:1135.2px;top:155.4px;width:46.500px;height:28.500px;background:#d6d2ca;border:1px solid #c2c0c4"><div class="t" style="left:.600px;top:2.800px;font-size:8.700px;transform:scaleX(.9);transform-origin:0 0;color:#000;text-shadow:.35px 0 #000">0037</div><svg class="a" style="left:21.2px;top:7.2px" width="22.3" height="13.300" viewBox="0 0 23 14" preserveAspectRatio="none" overflow="visible"><path d="M1 7C4.500 2.200 9 .900 11.500 .900S18.500 2.200 22 7C18.500 11.800 14 13.100 11.500 13.100S4.500 11.800 1 7z" fill="#fff" stroke="#7e7e7e" stroke-width="2.100"/><circle cx="11.500" cy="6.800" r="3.600" fill="#c6c6c6" stroke="#808080" stroke-width="1.500"/><path d="M10.200 5.700c0-1.800 2.800-1.800 2.800-.1 0 1.100-1.300 1.200-1.300 2.300M11.700 9.100v.9" stroke="#747474" stroke-width="1.100" fill="none"/></svg></div>
<div class="a" style="left:1187.5px;top:155.4px;width:46.500px;height:28.500px;background:#d6d2ca;border:1px solid #c2c0c4"><div class="t" style="left:.600px;top:2.800px;font-size:8.700px;transform:scaleX(.9);transform-origin:0 0;color:#000;text-shadow:.35px 0 #000">0038</div><svg class="a" style="left:21.2px;top:7.2px" width="22.3" height="13.300" viewBox="0 0 23 14" preserveAspectRatio="none" overflow="visible"><path d="M1 7C4.500 2.200 9 .900 11.500 .900S18.500 2.200 22 7C18.500 11.800 14 13.100 11.500 13.100S4.500 11.800 1 7z" fill="#fff" stroke="#7e7e7e" stroke-width="2.100"/><circle cx="11.500" cy="6.800" r="3.600" fill="#c6c6c6" stroke="#808080" stroke-width="1.500"/><path d="M10.200 5.700c0-1.800 2.800-1.800 2.800-.1 0 1.100-1.300 1.200-1.300 2.300M11.700 9.100v.9" stroke="#747474" stroke-width="1.100" fill="none"/></svg></div>
<div class="a" style="left:1239.8px;top:155.4px;width:46.500px;height:28.500px;background:#d6d2ca;border:1px solid #c2c0c4"><div class="t" style="left:.600px;top:2.800px;font-size:8.700px;transform:scaleX(.9);transform-origin:0 0;color:#000;text-shadow:.35px 0 #000">0039</div><svg class="a" style="left:21.2px;top:7.2px" width="22.3" height="13.300" viewBox="0 0 23 14" preserveAspectRatio="none" overflow="visible"><path d="M1 7C4.500 2.200 9 .900 11.500 .900S18.500 2.200 22 7C18.500 11.800 14 13.100 11.500 13.100S4.500 11.800 1 7z" fill="#fff" stroke="#7e7e7e" stroke-width="2.100"/><circle cx="11.500" cy="6.800" r="3.600" fill="#c6c6c6" stroke="#808080" stroke-width="1.500"/><path d="M10.200 5.700c0-1.800 2.800-1.800 2.800-.1 0 1.100-1.300 1.200-1.300 2.300M11.700 9.100v.9" stroke="#747474" stroke-width="1.100" fill="none"/></svg></div>
<div class="a " style="left:765px;top:262px;width:343px;height:60px;box-shadow:inset 1px 1px #808080,inset -1px -1px #fff"></div>
<div class="a " style="left:1110px;top:262px;width:206px;height:60px;box-shadow:inset 1px 1px #808080,inset -1px -1px #fff"></div>
<svg class="a" style="left:766px;top:278px" width="28" height="30" viewBox="0 0 28 30"><circle cx="17" cy="10" r="7.300" fill="#fff" stroke="#7cc0ec" stroke-width="1.200"/><circle cx="17" cy="6.500" r="1.300" fill="#1478d2"/><path d="M15.200 8.500H18v4.500h1.100v1.300h-4v-1.300h1.200V9.800h-1.100z" fill="#1478d2"/><path d="M.3 22.300L6.500 16l6.200 6.300h-1.700V28.500h-9v-6.200z" fill="#1c7cd0"/><rect x="4.600" y="23" width="3.800" height="3.300" fill="#fff"/></svg>
<div class="t " style="left:798px;top:278.6px;font-size:10px;letter-spacing:-.12px">TEH [ 1129, 112A, 112B ]</div>
<div class="t " style="left:795px;top:297px;font-size:10px;letter-spacing:-.1px">Arm status unknown</div>
<svg class="a" style="left:1084px;top:302px" width="17" height="17" viewBox="0 0 17 17"><path d="M4.500 8V5.500c0-4 7-4 7 0V8" fill="none" stroke="#8c9aa4" stroke-width="1.600"/><rect x="2" y="7.500" width="12.500" height="8" rx="1" fill="#3c98b8" stroke="#1c6888" stroke-width=".8"/><rect x="2.800" y="8.300" width="11" height="2.500" fill="#8cd0e4"/><path d="M8.200 10.500v3" stroke="#0c3848" stroke-width="1.600"/></svg>
<svg class="a" style="left:1121px;top:273px" width="26" height="24" viewBox="0 0 26 24"><defs><linearGradient id="gb" x1="0" y1="0" x2="1" y2="1"><stop offset="0" stop-color="#ff8c1c"/><stop offset="1" stop-color="#e8141c"/></linearGradient></defs><g fill="url(#gb)"><path d="M8 1.500c1.300-1 2.800-.3 3 .9 2.600 1.200 3.500 3.800 4 7 .4 2.100 1.100 3.200 2.300 4.500L3 17.900c.2-1.600.5-3 .2-5.200C2.700 9.400 3.400 6.200 6.300 4.400c0-1.100.6-2.200 1.700-2.900z"/><circle cx="9" cy="19" r="1.800"/></g><path d="M17.500 5c2.800 2.900 3.300 7.300 1.500 10.700M20.300 3.500c3.600 3.900 4 9.300 1.700 13.500" stroke="#e8443c" stroke-width="1.200" fill="none"/></svg>
<svg class="a" style="left:1152.500px;top:273px" width="26" height="22" viewBox="0 0 26 22"><defs><linearGradient id="gw" x1="0" y1="0" x2="1" y2="0"><stop offset="0" stop-color="#f88c14"/><stop offset="1" stop-color="#ffe000"/></linearGradient></defs><path d="M13 1.500L24.500 19.500H1.500z" fill="url(#gw)"/><rect x="12" y="6.500" width="2.200" height="7.500" fill="#111"/><rect x="12" y="15.300" width="2.200" height="2.200" fill="#111"/></svg>
<div class="a " style="left:1184px;top:271px;width:28px;height:28px;border-radius:4px;background:linear-gradient(#e8e8e6,#fdfdfd 45%,#c0c0bc 62%,#dcdcd8);border:1px solid #9a9a96"></div>
<svg class="a" style="left:1186px;top:277px" width="24" height="15" viewBox="0 0 24 15"><path d="M1 7.500C5 2.500 9.500 1.200 12 1.200S19 2.500 23 7.500C19 12.500 14.500 13.800 12 13.800S5 12.500 1 7.500z" fill="#fff" stroke="#28a050" stroke-width="1.300"/><circle cx="12" cy="7.300" r="4" fill="#34a858"/><circle cx="12" cy="7.300" r="2.100" fill="#7ccc6c"/></svg>
<div class="a " style="left:1220px;top:274px;width:21px;height:20px;background:linear-gradient(to right,#c8c8c8,#fff 35%);border:1px solid #3cb464"></div>
<div class="a " style="left:1227px;top:277px;width:5px;height:14px;background:#0c9a34;border-radius:2.500px"></div>
<div class="a " style="left:1249px;top:271px;width:1px;height:45px;background:#808080;box-shadow:1px 0 #fff"></div>
<svg class="a" style="left:1267px;top:274px" width="32" height="30" viewBox="0 0 32 30"><defs><linearGradient id="gm" x1="0" y1="0" x2="1" y2="0"><stop offset="0" stop-color="#2c6cdc"/><stop offset="1" stop-color="#a8c8f4"/></linearGradient></defs><rect x="2.500" y="2" width="16" height="23" fill="url(#gm)"/><path d="M4 6.500h12M4 10h12M4 13.500h12M4 17h12" stroke="#0c2c6c" stroke-width="1"/><circle cx="15.500" cy="13" r="7" fill="#c8dcf4" fill-opacity=".55" stroke="#111" stroke-width="1.900"/><path d="M20.500 18.500l7 7.500" stroke="#111" stroke-width="3.200" stroke-linecap="round"/></svg>
</div>
</body></html>
